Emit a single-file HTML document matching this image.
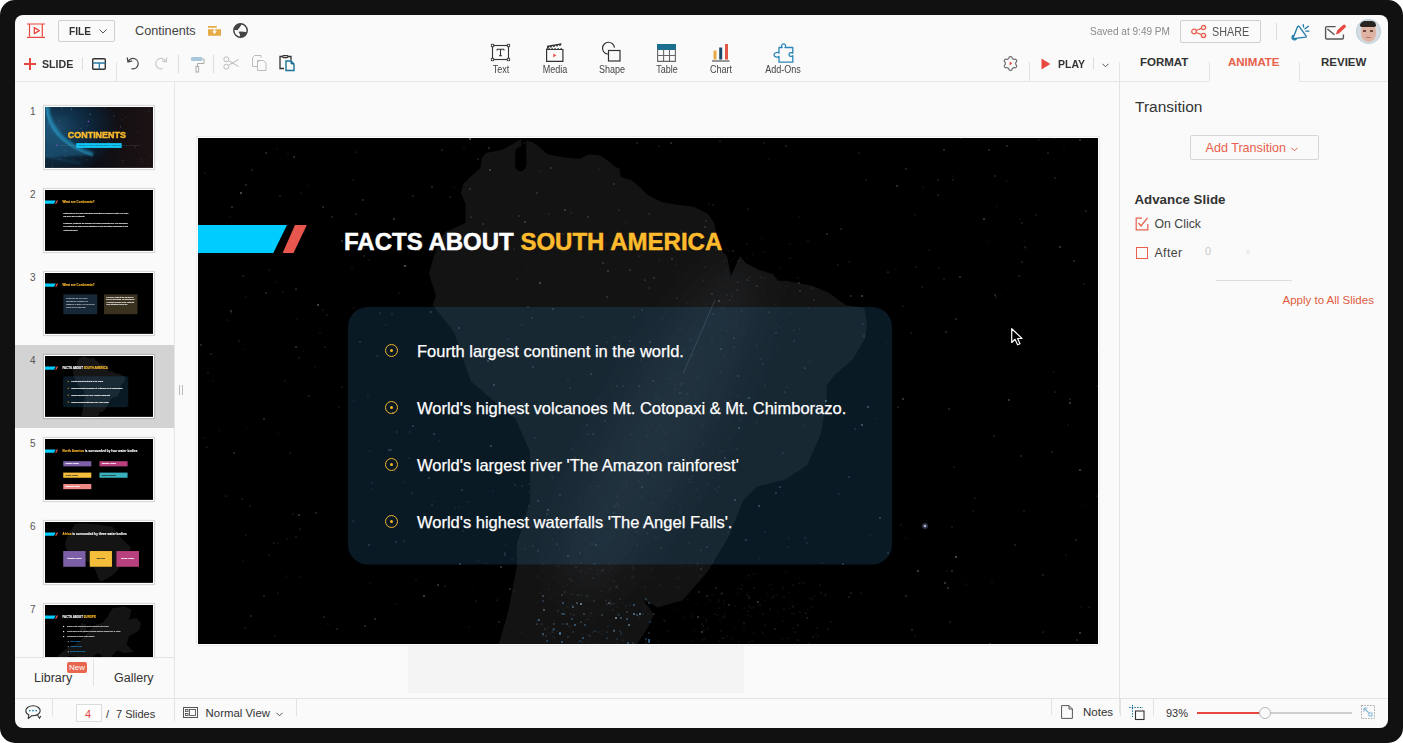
<!DOCTYPE html>
<html><head><meta charset="utf-8">
<style>
*{margin:0;padding:0;box-sizing:border-box}
html,body{width:1403px;height:743px;overflow:hidden;background:#fff;font-family:"Liberation Sans",sans-serif}
.frame{position:absolute;left:0;top:0;width:1403px;height:743px;background:#111;border-radius:15px;overflow:hidden}
.app{position:absolute;left:15px;top:15px;width:1373px;height:713px;background:#fafafa;border-radius:8px;overflow:hidden}
.pg{position:absolute;left:-15px;top:-15px;width:1403px;height:743px}
.a{position:absolute}
.t{position:absolute;white-space:nowrap;line-height:1}
.vl{position:absolute;width:1px;background:#e0e0e0}
.hl{position:absolute;height:1px;background:#e3e3e3}
svg{position:absolute;overflow:visible}
.lbl{position:absolute;top:65px;width:80px;text-align:center;font-size:10px;line-height:1;color:#444;transform:scaleX(.9);white-space:nowrap}

.bul{position:absolute;left:187px;width:13px;height:13px;border:1.5px solid #f0b429;border-radius:50%}
.bul:after{content:"";position:absolute;left:3.5px;top:3.5px;width:3px;height:3px;border-radius:50%;background:#f0b429}
.st{left:219px;font-size:16.5px;color:#fff;-webkit-text-stroke:0.25px #fff}

.thumb{position:absolute;width:110px;height:63px;border:1px solid #fff;box-shadow:0 0 1px 1px rgba(0,0,0,.13);overflow:hidden;background:#fff}
.sc{position:absolute;left:0;top:0;width:900px;height:506px;transform:scale(.12);transform-origin:0 0;overflow:hidden;background:#000}
.box5{position:absolute;width:234px;height:43px}
.bt{position:absolute;left:18px;top:12px;font-size:17px;font-weight:bold;white-space:nowrap;-webkit-text-stroke:1px currentColor}
.bt2{position:absolute;left:0;width:100%;top:55px;text-align:center;font-size:17px;font-weight:bold;white-space:nowrap;-webkit-text-stroke:1px currentColor}

</style></head>
<body>
<div class="frame">
<div class="app"><div class="pg" id="pg">

<!-- ============ TOP BAR ROW 1 ============ -->
<!-- logo -->
<svg style="left:27px;top:23px" width="18" height="15" viewBox="0 0 18 15">
 <path d="M0 1H18M0 14.4H18M2.5 1V13.5M15.3 1V13.5" stroke="#e8473f" stroke-width="1.2" fill="none"/>
 <path d="M7.3 4.6L12.3 7.6L7.3 10.6Z" stroke="#e8473f" stroke-width="1.3" fill="none" stroke-linejoin="round"/>
</svg>
<!-- FILE button -->
<div class="a" style="left:58px;top:20px;width:57px;height:22px;border:1px solid #cfcfcf;border-radius:2px;background:#fafafa"></div>
<div class="t" style="left:69px;top:26px;font-size:11.5px;font-weight:bold;color:#333;transform:scaleX(.88);transform-origin:0 0">FILE</div>
<svg style="left:99px;top:29px" width="8" height="5" viewBox="0 0 8 5"><path d="M0.5 0.5L4 4L7.5 0.5" stroke="#555" stroke-width="1" fill="none"/></svg>
<div class="t" style="left:135px;top:24.5px;font-size:12.7px;color:#444">Continents</div>
<!-- folder -->
<svg style="left:208px;top:26px" width="13" height="10" viewBox="0 0 13 10">
 <path d="M0 0H8.5L9 1.8H0Z" fill="#e6ab45"/>
 <path d="M0 3.2H13V9.8H0Z" fill="#e6ab45"/>
 <path d="M5.7 3.2H7.3V5.2H8.9L6.5 7.9L4.1 5.2H5.7Z" fill="#fff"/>
</svg>
<!-- globe -->
<svg style="left:233px;top:23px" width="15" height="15" viewBox="0 0 15 15">
 <circle cx="7.5" cy="7.5" r="6.7" stroke="#444" stroke-width="1.5" fill="none"/>
 <path d="M0.9 6.8A6.6 6.6 0 0 1 8.8 0.9Q6.8 4.5 4.4 7.3Z" fill="#444"/>
 <path d="M5.4 8.7Q10 8.2 14.2 9.6A6.7 6.7 0 0 1 7.2 14.2Q7.8 11.2 5.4 8.7Z" fill="#444"/>
</svg>

<!-- right side row1 -->
<div class="t" style="left:1090px;top:26.3px;font-size:10.5px;color:#8a8a8a;transform:scaleX(.958);transform-origin:0 0">Saved at 9:49 PM</div>
<div class="a" style="left:1180px;top:20px;width:81px;height:23px;border:1px solid #cfcfcf;border-radius:2px"></div>
<svg style="left:1191px;top:25px" width="16" height="13" viewBox="0 0 16 13">
 <circle cx="3" cy="6.5" r="2.3" stroke="#e8604c" stroke-width="1.3" fill="none"/>
 <circle cx="12.5" cy="2.6" r="2.1" stroke="#e8604c" stroke-width="1.3" fill="none"/>
 <circle cx="12.5" cy="10.4" r="2.1" stroke="#e8604c" stroke-width="1.3" fill="none"/>
 <path d="M5.1 5.5L10.5 3.4M5.1 7.5L10.5 9.6" stroke="#e8604c" stroke-width="1.3"/>
</svg>
<div class="t" style="left:1212px;top:26px;font-size:12px;color:#555;transform:scaleX(.9);transform-origin:0 0">SHARE</div>
<div class="vl" style="left:1276px;top:23px;height:17px;background:#ddd"></div>
<!-- megaphone -->
<svg style="left:1291px;top:23px" width="20" height="18" viewBox="0 0 20 18">
 <path d="M6.6 3.6Q7.5 2.6 8.3 3.6L15.2 13.2Q15.6 14 14.8 14.2L2.6 15.6Q1.8 15.6 2.2 14.8Z" stroke="#1f7aa6" stroke-width="1.3" fill="none" stroke-linejoin="round"/>
 <path d="M2.6 12.2A2.4 2.4 0 1 0 5.6 15.4" stroke="#1f7aa6" stroke-width="1.3" fill="none"/>
 <path d="M12.2 1.7L12.6 4M14 5.8L17.4 3.3M14.9 8.2H17.9" stroke="#1f7aa6" stroke-width="1.3" stroke-linecap="round"/>
</svg>
<!-- mail with pen -->
<svg style="left:1324px;top:24px" width="22" height="17" viewBox="0 0 22 17">
 <path d="M11.6 2.6H2.8Q1.6 2.6 1.6 3.8V13.8Q1.6 15 2.8 15H18.2Q19.4 15 19.4 13.8V10.4" stroke="#555" stroke-width="1.4" fill="none"/>
 <path d="M3.4 5L10.5 10.7" stroke="#555" stroke-width="1.4"/>
 <path d="M14.8 7.3L20.2 2.3" stroke="#e8473f" stroke-width="3.4" stroke-linecap="round"/><path d="M13.3 6.6L15.6 8.9L11.8 10.4Z" fill="#e8473f"/>
</svg>
<!-- avatar -->
<div class="a" style="left:1357px;top:20px;width:23px;height:23px;border-radius:50%;background:#d5dbe0;overflow:hidden;box-shadow:0 0 0 1px #b9cfdc">
 <div class="a" style="left:3.5px;top:3px;width:15px;height:19px;border-radius:45% 45% 48% 48%;background:#deb3a4"></div>
 <div class="a" style="left:3px;top:1px;width:16px;height:6px;border-radius:8px 8px 3px 3px;background:#2a2420"></div>
 <div class="a" style="left:6px;top:10px;width:3px;height:1.5px;background:#6b4a40"></div>
 <div class="a" style="left:13px;top:10px;width:3px;height:1.5px;background:#6b4a40"></div>
 <div class="a" style="left:9px;top:16.5px;width:5px;height:1.5px;border-radius:1px;background:#c0706a"></div>
</div>

<!-- ============ TOP BAR ROW 2 ============ -->
<svg style="left:24px;top:58px" width="12" height="12" viewBox="0 0 12 12"><path d="M6 0V12M0 6H12" stroke="#e8473f" stroke-width="2"/></svg>
<div class="t" style="left:42px;top:59px;font-size:11.5px;font-weight:bold;color:#333;transform:scaleX(.924);transform-origin:0 0">SLIDE</div>
<div class="vl" style="left:82px;top:57px;height:13px;background:#ddd"></div>
<svg style="left:92px;top:58px" width="14" height="12" viewBox="0 0 14 12">
 <rect x="0.7" y="0.7" width="12.6" height="10.6" rx="1" stroke="#333" stroke-width="1.4" fill="none"/>
 <path d="M0.7 5H13.3M7.3 5V11.3" stroke="#2a7aa5" stroke-width="1.3"/>
</svg>
<div class="vl" style="left:116px;top:62px;height:19px;background:#e3e3e3"></div>
<!-- undo -->
<svg style="left:126px;top:56px" width="14" height="14" viewBox="0 0 14 14">
 <path d="M2.2 5.5A5.2 5.2 0 1 1 5.5 12.6" stroke="#444" stroke-width="1.3" fill="none"/>
 <path d="M1.2 1.5L2 6L6.2 4.8" stroke="#444" stroke-width="1.3" fill="none"/>
</svg>
<!-- redo -->
<svg style="left:154px;top:56px" width="14" height="14" viewBox="0 0 14 14">
 <path d="M11.8 5.5A5.2 5.2 0 1 0 8.5 12.6" stroke="#c8c8c8" stroke-width="1.3" fill="none"/>
 <path d="M12.8 1.5L12 6L7.8 4.8" stroke="#c8c8c8" stroke-width="1.3" fill="none"/>
</svg>
<div class="vl" style="left:178px;top:55px;height:18px;background:#ddd"></div>
<!-- roller -->
<svg style="left:191px;top:57px" width="14" height="16" viewBox="0 0 14 16">
 <rect x="0" y="0" width="11" height="4" rx="1" fill="#a9c8dc"/>
 <path d="M11 2H13V6.5H6.5V9.5" stroke="#aaa" stroke-width="1" fill="none"/>
 <rect x="5" y="9.5" width="2.6" height="5.5" stroke="#aaa" stroke-width="1" fill="none"/>
</svg>
<div class="vl" style="left:213px;top:55px;height:18px;background:#ddd"></div>
<!-- scissors -->
<svg style="left:223px;top:56px" width="16" height="14" viewBox="0 0 16 14">
 <circle cx="3.3" cy="3.3" r="2.5" stroke="#bbb" stroke-width="1" fill="none"/>
 <circle cx="3.3" cy="10.7" r="2.5" stroke="#bbb" stroke-width="1" fill="none"/>
 <path d="M5.4 4.6L15.5 10.5M5.4 9.4L15.5 3.5" stroke="#bbb" stroke-width="1"/>
</svg>
<!-- copy -->
<svg style="left:252px;top:55px" width="15" height="16" viewBox="0 0 15 16">
 <path d="M9 2.5V0.5H2.5L0.5 2.5V11.5H5" stroke="#bbb" stroke-width="1" fill="none"/>
 <path d="M5.5 5.5H11.5L14 8V15.5H5.5Z M5.5 7.5L7.5 5.5" stroke="#bbb" stroke-width="1" fill="none"/>
</svg>
<!-- paste -->
<svg style="left:279px;top:55px" width="16" height="16" viewBox="0 0 16 16">
 <path d="M3.5 1.5H1V13.5H5M9 1.5H12V5.5" stroke="#333" stroke-width="1.3" fill="none"/>
 <rect x="3.7" y="0.6" width="5.2" height="2" rx="0.8" stroke="#333" stroke-width="1.2" fill="none"/>
 <path d="M7 6H12L15 9V15.5H7Z" stroke="#1a7196" stroke-width="1.4" fill="none"/>
 <path d="M12 6V9H15" fill="#1a7196" stroke="#1a7196" stroke-width="0.8"/>
</svg>

<!-- center insert tools -->
<svg style="left:491px;top:44px" width="19" height="17" viewBox="0 0 19 17">
 <rect x="1.5" y="1.5" width="16" height="14" stroke="#333" stroke-width="1.1" fill="none"/>
 <rect x="0.3" y="0.3" width="2.4" height="2.4" fill="#fafafa" stroke="#333" stroke-width="0.8"/>
 <rect x="16.3" y="0.3" width="2.4" height="2.4" fill="#fafafa" stroke="#333" stroke-width="0.8"/>
 <rect x="0.3" y="14.3" width="2.4" height="2.4" fill="#fafafa" stroke="#333" stroke-width="0.8"/>
 <rect x="16.3" y="14.3" width="2.4" height="2.4" fill="#fafafa" stroke="#333" stroke-width="0.8"/>
 <path d="M6 5.3H13M6 5.3V6.6M13 5.3V6.6M9.5 5.3V11.8M8 11.8H11" stroke="#333" stroke-width="1.1" fill="none"/>
</svg>
<div class="lbl" style="left:460.6px">Text</div>
<svg style="left:546px;top:43px" width="18" height="19" viewBox="0 0 18 19">
 <path d="M0.6 6.5V18.4H16.9V6.5H0.6Z" stroke="#333" stroke-width="1.2" fill="none"/>
 <path d="M0.6 6.5L2.5 3.5" stroke="#333" stroke-width="1.2"/>
 <path d="M1 3.5L15.5 0.8M1.5 5L3 3.2M4.5 4.5L6 2.6M7.5 3.9L9 2M10.5 3.3L12 1.5M13.5 2.7L15 1" stroke="#333" stroke-width="1.3" fill="none"/>
 <path d="M2.5 6.5L3.5 5M5.5 6.5L6.5 5M8.5 6.5L9.5 5M11.5 6.5L12.5 5M14.5 6.5L15.5 5" stroke="#333" stroke-width="1.2"/>
 <path d="M7.3 10.5L10.3 12.4L7.3 14.3Z" fill="#e8473f"/>
</svg>
<div class="lbl" style="left:514.8px">Media</div>
<svg style="left:601px;top:42px" width="21" height="21" viewBox="0 0 21 21">
 <path d="M6.8 12.2A6 6 0 1 1 13.5 5.6" stroke="#333" stroke-width="1.2" fill="none"/>
 <rect x="7.5" y="8.5" width="11.5" height="10.5" stroke="#333" stroke-width="1.2" fill="none"/>
</svg>
<div class="lbl" style="left:571.9px">Shape</div>
<svg style="left:657px;top:44px" width="19" height="18" viewBox="0 0 19 18">
 <rect x="0" y="0" width="19" height="6" fill="#1a6e8e"/>
 <path d="M0.6 5.5V17.4H18.4V5.5M0.6 11.5H18.4M6.6 5.5V17.4M12.5 5.5V17.4" stroke="#666" stroke-width="1.1" fill="none"/>
</svg>
<div class="lbl" style="left:626.9px">Table</div>
<svg style="left:712px;top:43px" width="18" height="19" viewBox="0 0 18 19">
 <rect x="1.5" y="7.5" width="3" height="9" fill="#e6ab45"/>
 <rect x="7.2" y="4.5" width="3" height="12" fill="#1b4b6a"/>
 <rect x="13" y="1" width="3" height="15.5" fill="#e05543"/>
 <path d="M0 18H17.5" stroke="#333" stroke-width="1.1"/>
</svg>
<div class="lbl" style="left:680.9px">Chart</div>
<svg style="left:773px;top:43px" width="21" height="20" viewBox="0 0 21 20">
 <path d="M6 4.5H9.2C8.2 3.5 8.3 0.8 10.6 0.8C12.9 0.8 13 3.5 12 4.5H19.8V10.2C18.8 9.2 16 9.3 16 11.5C16 13.7 18.8 13.8 19.8 12.8V19.2H6V13.5C5 14.5 1 14.5 1 11.8C1 9.1 5 9.1 6 10.1Z" stroke="#2a86b8" stroke-width="1.3" fill="none" stroke-linejoin="round"/>
</svg>
<div class="lbl" style="left:743px">Add-Ons</div>

<!-- right row2 -->
<svg style="left:1002.5px;top:55.5px" width="15" height="15" viewBox="0 0 15 15">
 <path d="M12.65 7.50 L12.66 7.32 L12.67 7.14 L12.70 6.95 L12.74 6.76 L12.80 6.57 L12.88 6.36 L13.02 6.12 L13.56 5.76 L13.68 5.49 L13.72 5.24 L13.72 4.99 L13.69 4.75 L13.63 4.51 L13.54 4.29 L13.43 4.08 L13.30 3.87 L13.15 3.69 L12.98 3.52 L12.79 3.37 L12.57 3.24 L12.33 3.15 L12.04 3.12 L11.45 3.41 L11.18 3.41 L10.96 3.38 L10.76 3.33 L10.57 3.27 L10.40 3.20 L10.23 3.13 L10.08 3.04 L9.92 2.95 L9.77 2.84 L9.63 2.72 L9.48 2.59 L9.34 2.45 L9.20 2.27 L9.07 2.03 L9.03 1.38 L8.85 1.14 L8.65 0.98 L8.43 0.86 L8.21 0.76 L7.98 0.70 L7.74 0.66 L7.50 0.65 L7.26 0.66 L7.02 0.70 L6.79 0.76 L6.57 0.86 L6.35 0.98 L6.15 1.14 L5.97 1.38 L5.93 2.03 L5.80 2.27 L5.66 2.45 L5.52 2.59 L5.37 2.72 L5.23 2.84 L5.08 2.95 L4.93 3.04 L4.77 3.13 L4.60 3.20 L4.43 3.27 L4.24 3.33 L4.04 3.38 L3.82 3.41 L3.55 3.41 L2.96 3.12 L2.67 3.15 L2.43 3.24 L2.21 3.37 L2.02 3.52 L1.85 3.69 L1.70 3.87 L1.57 4.08 L1.46 4.29 L1.37 4.51 L1.31 4.75 L1.28 4.99 L1.28 5.24 L1.32 5.49 L1.44 5.76 L1.98 6.12 L2.12 6.36 L2.20 6.57 L2.26 6.76 L2.30 6.95 L2.33 7.14 L2.34 7.32 L2.35 7.50 L2.34 7.68 L2.33 7.86 L2.30 8.05 L2.26 8.24 L2.20 8.43 L2.12 8.64 L1.98 8.88 L1.44 9.24 L1.32 9.51 L1.28 9.76 L1.28 10.01 L1.31 10.25 L1.37 10.49 L1.46 10.71 L1.57 10.93 L1.70 11.13 L1.85 11.31 L2.02 11.48 L2.21 11.63 L2.43 11.76 L2.67 11.85 L2.96 11.88 L3.55 11.59 L3.82 11.59 L4.04 11.62 L4.24 11.67 L4.43 11.73 L4.60 11.80 L4.77 11.87 L4.92 11.96 L5.08 12.05 L5.23 12.16 L5.37 12.28 L5.52 12.41 L5.66 12.55 L5.80 12.73 L5.93 12.97 L5.97 13.62 L6.15 13.86 L6.35 14.02 L6.57 14.14 L6.79 14.24 L7.02 14.30 L7.26 14.34 L7.50 14.35 L7.74 14.34 L7.98 14.30 L8.21 14.24 L8.43 14.14 L8.65 14.02 L8.85 13.86 L9.03 13.62 L9.07 12.97 L9.20 12.73 L9.34 12.55 L9.48 12.41 L9.63 12.28 L9.77 12.16 L9.92 12.05 L10.08 11.96 L10.23 11.87 L10.40 11.80 L10.57 11.73 L10.76 11.67 L10.96 11.62 L11.18 11.59 L11.45 11.59 L12.04 11.88 L12.33 11.85 L12.57 11.76 L12.79 11.63 L12.98 11.48 L13.15 11.31 L13.30 11.13 L13.43 10.93 L13.54 10.71 L13.63 10.49 L13.69 10.25 L13.72 10.01 L13.72 9.76 L13.68 9.51 L13.56 9.24 L13.02 8.88 L12.88 8.64 L12.80 8.43 L12.74 8.24 L12.70 8.05 L12.67 7.86 L12.66 7.68Z" stroke="#666" stroke-width="1.1" fill="none" stroke-linejoin="round"/>
 <path d="M6.6 5.6L9.2 7.5L6.6 9.4Z" fill="#e8473f"/>
</svg>
<div class="vl" style="left:1029px;top:62px;height:19px;background:#e3e3e3"></div>
<svg style="left:1041px;top:58px" width="10" height="12" viewBox="0 0 10 12"><path d="M0.5 0.5L9.3 6L0.5 11.5Z" fill="#e8473f"/></svg>
<div class="t" style="left:1058px;top:59.3px;font-size:11.5px;font-weight:bold;color:#333;transform:scaleX(.913);transform-origin:0 0">PLAY</div>
<div class="vl" style="left:1093px;top:57px;height:12px;background:#ddd"></div>
<svg style="left:1102px;top:63px" width="7" height="5" viewBox="0 0 7 5"><path d="M0.5 0.8L3.5 3.8L6.5 0.8" stroke="#555" stroke-width="1" fill="none"/></svg>

<!-- tabs -->
<div class="vl" style="left:1119px;top:62px;height:651px;background:#e3e3e3"></div>
<div class="vl" style="left:1209px;top:62px;height:19px;background:#e3e3e3"></div>
<div class="vl" style="left:1299px;top:62px;height:19px;background:#e3e3e3"></div>
<div class="t" style="left:1140px;top:57px;font-size:11.5px;font-weight:bold;color:#333">FORMAT</div>
<div class="t" style="left:1228px;top:57px;font-size:11.5px;font-weight:bold;color:#e8604c">ANIMATE</div>
<div class="t" style="left:1321px;top:57px;font-size:11.5px;font-weight:bold;color:#333">REVIEW</div>

<!-- toolbar bottom border -->
<div class="hl" style="left:15px;top:81px;width:1105px;background:#e6e6e6"></div>
<div class="hl" style="left:1120px;top:81px;width:89px;background:#e6e6e6"></div>
<div class="hl" style="left:1299px;top:81px;width:89px;background:#e6e6e6"></div>


<!-- ============ LEFT PANEL ============ -->
<div class="vl" style="left:174px;top:82px;height:616px;background:#e6e6e6"></div>
<div class="a" style="left:15px;top:345px;width:159px;height:83px;background:#d3d3d3"></div>
<div class="t" style="left:30px;top:107px;font-size:10px;color:#555">1</div>
<div class="t" style="left:30px;top:190px;font-size:10px;color:#555">2</div>
<div class="t" style="left:30px;top:273px;font-size:10px;color:#555">3</div>
<div class="t" style="left:30px;top:356px;font-size:10px;color:#555">4</div>
<div class="t" style="left:30px;top:439px;font-size:10px;color:#555">5</div>
<div class="t" style="left:30px;top:522px;font-size:10px;color:#555">6</div>
<div class="t" style="left:30px;top:605px;font-size:10px;color:#555">7</div>

<!-- thumbs -->
<div class="thumb" style="left:44px;top:106px"><div class="sc"><div class="a" style="left:0;top:0;width:900px;height:506px;background:radial-gradient(ellipse 60% 80% at 8% 35%,#1d4e6e 0%,#10304a 40%,rgba(10,20,30,0) 100%),linear-gradient(90deg,#0c1c2a 0%,#0a0e16 45%,#161012 75%,#1c1214 100%)"></div>
<svg style="left:0;top:0" width="900" height="506" viewBox="0 0 900 506"><defs><filter id="pb" x="-50%" y="-50%" width="200%" height="200%"><feGaussianBlur stdDeviation="10"/></filter></defs>
<path d="M0 0H30Q40 280 400 400L0 420Z" fill="#1a5a80" fill-opacity=".6" filter="url(#pb)"/>
<path d="M20 -10Q30 270 400 395" stroke="#2aa8d8" stroke-opacity=".55" stroke-width="34" fill="none" filter="url(#pb)"/>
<path d="M10 -10Q25 285 400 405" stroke="#3ec0ee" stroke-opacity=".3" stroke-width="8" fill="none"/>
<path d="M0 400Q150 450 300 470" stroke="#1a6a90" stroke-opacity=".25" stroke-width="20" fill="none" filter="url(#pb)"/><circle cx="214" cy="275" r="4" fill="#60a0c0" fill-opacity="0.49"/><circle cx="523" cy="306" r="4" fill="#806060" fill-opacity="0.52"/><circle cx="173" cy="363" r="5" fill="#60a0c0" fill-opacity="0.49"/><circle cx="575" cy="76" r="5" fill="#5a7a90" fill-opacity="0.65"/><circle cx="471" cy="375" r="5" fill="#5a7a90" fill-opacity="0.36"/><circle cx="862" cy="22" r="3" fill="#806060" fill-opacity="0.49"/><circle cx="647" cy="445" r="5" fill="#806060" fill-opacity="0.46"/><circle cx="721" cy="225" r="3" fill="#806060" fill-opacity="0.34"/><circle cx="122" cy="110" r="5" fill="#806060" fill-opacity="0.61"/><circle cx="770" cy="213" r="4" fill="#60a0c0" fill-opacity="0.44"/><circle cx="527" cy="296" r="4" fill="#60a0c0" fill-opacity="0.67"/><circle cx="26" cy="142" r="5" fill="#60a0c0" fill-opacity="0.58"/><circle cx="629" cy="165" r="5" fill="#60a0c0" fill-opacity="0.53"/><circle cx="642" cy="107" r="5" fill="#806060" fill-opacity="0.41"/><circle cx="57" cy="432" r="4" fill="#5a7a90" fill-opacity="0.44"/><circle cx="60" cy="454" r="3" fill="#806060" fill-opacity="0.47"/><circle cx="374" cy="60" r="5" fill="#60a0c0" fill-opacity="0.60"/><circle cx="340" cy="297" r="5" fill="#806060" fill-opacity="0.50"/><circle cx="899" cy="157" r="3" fill="#5a7a90" fill-opacity="0.54"/><circle cx="28" cy="100" r="4" fill="#806060" fill-opacity="0.54"/><circle cx="141" cy="21" r="4" fill="#806060" fill-opacity="0.44"/><circle cx="124" cy="436" r="4" fill="#806060" fill-opacity="0.65"/><circle cx="348" cy="439" r="5" fill="#60a0c0" fill-opacity="0.34"/><circle cx="876" cy="411" r="4" fill="#806060" fill-opacity="0.55"/><circle cx="644" cy="474" r="4" fill="#806060" fill-opacity="0.51"/><circle cx="494" cy="6" r="4" fill="#60a0c0" fill-opacity="0.43"/><circle cx="339" cy="298" r="3" fill="#5a7a90" fill-opacity="0.55"/><circle cx="299" cy="179" r="4" fill="#60a0c0" fill-opacity="0.58"/><circle cx="664" cy="11" r="3" fill="#60a0c0" fill-opacity="0.31"/><circle cx="332" cy="318" r="4" fill="#60a0c0" fill-opacity="0.54"/><circle cx="160" cy="94" r="4" fill="#60a0c0" fill-opacity="0.41"/><circle cx="709" cy="53" r="3" fill="#60a0c0" fill-opacity="0.57"/><circle cx="118" cy="253" r="5" fill="#806060" fill-opacity="0.40"/><circle cx="169" cy="220" r="5" fill="#5a7a90" fill-opacity="0.34"/><circle cx="290" cy="169" r="3" fill="#806060" fill-opacity="0.62"/><circle cx="865" cy="40" r="5" fill="#60a0c0" fill-opacity="0.39"/><circle cx="512" cy="137" r="3" fill="#5a7a90" fill-opacity="0.51"/><circle cx="172" cy="408" r="5" fill="#5a7a90" fill-opacity="0.65"/><circle cx="306" cy="419" r="3" fill="#60a0c0" fill-opacity="0.44"/><circle cx="117" cy="148" r="4" fill="#806060" fill-opacity="0.44"/><circle cx="375" cy="212" r="4" fill="#5a7a90" fill-opacity="0.67"/><circle cx="140" cy="2" r="5" fill="#60a0c0" fill-opacity="0.47"/><circle cx="855" cy="469" r="3" fill="#5a7a90" fill-opacity="0.60"/><circle cx="753" cy="335" r="5" fill="#806060" fill-opacity="0.52"/><circle cx="801" cy="436" r="5" fill="#806060" fill-opacity="0.35"/><circle cx="220" cy="18" r="5" fill="#60a0c0" fill-opacity="0.67"/><circle cx="807" cy="455" r="5" fill="#5a7a90" fill-opacity="0.31"/><circle cx="671" cy="87" r="4" fill="#5a7a90" fill-opacity="0.57"/><circle cx="472" cy="209" r="5" fill="#5a7a90" fill-opacity="0.44"/><circle cx="227" cy="436" r="4" fill="#5a7a90" fill-opacity="0.44"/><circle cx="178" cy="271" r="3" fill="#5a7a90" fill-opacity="0.40"/><circle cx="246" cy="450" r="3" fill="#5a7a90" fill-opacity="0.50"/><circle cx="514" cy="203" r="4" fill="#5a7a90" fill-opacity="0.41"/><circle cx="475" cy="214" r="4" fill="#806060" fill-opacity="0.61"/><circle cx="2" cy="28" r="3" fill="#5a7a90" fill-opacity="0.35"/><circle cx="62" cy="493" r="5" fill="#5a7a90" fill-opacity="0.51"/><circle cx="441" cy="79" r="3" fill="#806060" fill-opacity="0.45"/><circle cx="351" cy="154" r="4" fill="#5a7a90" fill-opacity="0.70"/><circle cx="386" cy="65" r="3" fill="#60a0c0" fill-opacity="0.59"/><circle cx="716" cy="287" r="3" fill="#806060" fill-opacity="0.48"/>
</svg>
<div class="a" style="left:355px;top:115px;width:12px;height:12px;border-radius:50%;background:#a050e0"></div>
<div class="a" style="left:95px;top:312px;width:12px;height:12px;border-radius:50%;background:#a050e0"></div>
<div class="a" style="left:125px;top:320px;width:667px;height:3px;background:rgba(200,200,200,.3)"></div>
<div class="a" style="left:261px;top:301px;width:378px;height:40px;background:#12c6f5"></div>
<div class="t" style="left:280px;top:313px;font-size:16px;color:#063;letter-spacing:1px;color:#0b3a4a">SEVEN LARGE CONTINUOUS MASSES OF LAND</div>
<div class="t" style="left:190px;top:194px;font-size:81px;font-weight:bold;color:#fdbb2d;-webkit-text-stroke:4px #fdbb2d;transform:scaleX(.92);transform-origin:0 0">CONTINENTS</div></div></div>
<div class="thumb" style="left:44px;top:189px"><div class="sc"><div class="a" style="left:0;top:0;width:900px;height:506px;background:#000"></div><svg style="left:0;top:0" width="900" height="506" viewBox="0 0 900 506"><path d="M0 87H89L75.3 115H0Z" fill="#00ccff"/><path d="M97 87H108.8L95.5 115H84.6Z" fill="#e8574e"/></svg><div class="t" style="left:146px;top:92px;font-size:24px;font-weight:bold;color:#fff;-webkit-text-stroke:1px currentColor;letter-spacing:1px"><span style="color:#fdbb2d">What are Continents?</span></div>
<div class="a" style="left:152px;top:180px;width:545px;font-size:15px;line-height:29px;color:#eee;-webkit-text-stroke:.8px #eee">Continents are very large landmasses separated by expanses of water. The world has seven such continents.</div>
<div class="a" style="left:152px;top:266px;width:545px;font-size:15px;line-height:27px;color:#eee;-webkit-text-stroke:.8px #eee">Geography, continents are described by types of landmass here. The boundaries of a continent are based on the distribution of land and water; landmasses by rule "continental shelf".</div></div></div>
<div class="thumb" style="left:44px;top:272px"><div class="sc"><div class="a" style="left:0;top:0;width:900px;height:506px;background:#000"></div><svg style="left:0;top:0" width="900" height="506" viewBox="0 0 900 506"><path d="M0 87H89L75.3 115H0Z" fill="#00ccff"/><path d="M97 87H108.8L95.5 115H84.6Z" fill="#e8574e"/></svg><div class="t" style="left:146px;top:92px;font-size:24px;font-weight:bold;color:#fff;-webkit-text-stroke:1px currentColor;letter-spacing:1px"><span style="color:#fdbb2d">What are Continents?</span></div>
<div class="a" style="left:153px;top:178px;width:282px;height:165px;background:#172839"></div>
<div class="a" style="left:492px;top:178px;width:279px;height:165px;background:#3b311f"></div>
<div class="a" style="left:175px;top:195px;width:240px;font-size:15px;line-height:27px;color:#ddd;font-weight:bold">Continents are very large landmasses separated by expanses of water. The world has seven such continents.</div>
<div class="a" style="left:512px;top:195px;width:240px;font-size:13px;line-height:20px;color:#eee;-webkit-text-stroke:.8px #eee">In geology, continents are described by types of land masses. The boundaries of a continent are based on the continental shelf, distributing rocks by rule.</div></div></div>
<div class="thumb" style="left:44px;top:355px"><div class="sc"><div class="a" style="left:0;top:0;width:900px;height:506px;background:#000"></div>
<svg style="left:0;top:0" width="900" height="506" viewBox="198 138 900 506"><path d="M520.4 139.4 L531.8 141.7 L538.6 146.3 L547.7 154.2 L566.0 157.7 L579.7 158.8 L588.8 154.2 L600.2 155.4 L607.0 160.0 L613.9 165.7 L619.6 169.0 L620.7 177.0 L632.0 180.5 L641.3 188.5 L648.0 195.3 L661.8 202.1 L675.5 204.4 L693.7 206.7 L707.4 213.6 L714.3 222.7 L716.5 234.0 L721.0 250.0 L727.0 256.0 L731.0 276.0 L740.0 256.0 L745.8 263.3 L759.2 270.0 L772.7 274.0 L778.0 280.8 L786.0 280.8 L813.0 286.0 L829.2 292.9 L845.4 305.0 L864.2 307.7 L866.9 323.8 L865.5 337.3 L853.4 358.8 L834.6 375.0 L826.5 385.7 L826.5 400.0 L821.0 433.3 L807.0 465.3 L785.6 479.5 L757.0 486.6 L743.0 500.8 L728.8 536.4 L707.4 572.0 L682.6 600.3 L657.7 607.4 L643.5 600.3 L654.0 614.5 L647.0 628.8 L636.0 646.0 L498.0 646.0 L501.3 636.0 L508.7 609.6 L516.8 566.0 L516.8 544.0 L530.4 501.0 L529.7 451.0 L515.5 419.0 L508.7 414.0 L470.6 381.0 L454.0 332.0 L432.6 305.0 L436.0 295.7 L431.4 282.0 L429.0 272.9 L433.7 256.9 L440.5 238.6 L445.0 231.8 L456.5 227.2 L465.6 222.7 L465.6 204.4 L461.0 193.0 L463.3 184.0 L472.5 174.8 L480.4 168.0 L481.6 158.8 L486.0 153.0 L502.0 149.7 L511.2 145.0Z" fill="#161616"/>
<path d="M198 225H287L273.3 253H198Z" fill="#00ccff"/><path d="M295 225H306.8L293.5 253H282.6Z" fill="#e8574e"/>
<rect x="348" y="307" width="544" height="257.5" rx="20" fill="rgb(45,118,168)" fill-opacity="0.22"/></svg>
<div class="t" style="left:146px;top:92px;font-size:24px;font-weight:bold;color:#fff;-webkit-text-stroke:1px currentColor">FACTS ABOUT <span style="color:#fdbb2d">SOUTH AMERICA</span></div>
<div class="bul" style="top:206px;border-width:3px"></div><div class="bul" style="top:263px;border-width:3px"></div><div class="bul" style="top:320px;border-width:3px"></div><div class="bul" style="top:377px;border-width:3px"></div>
<div class="t st" style="top:205px;-webkit-text-stroke:1px #fff">Fourth largest continent in the world.</div>
<div class="t st" style="top:262px;-webkit-text-stroke:1px #fff">World's highest volcanoes Mt. Cotopaxi &amp; Mt. Chimborazo.</div>
<div class="t st" style="top:319px;-webkit-text-stroke:1px #fff">World's largest river 'The Amazon rainforest'</div>
<div class="t st" style="top:376px;-webkit-text-stroke:1px #fff">World's highest waterfalls 'The Angel Falls'.</div></div></div>
<div class="thumb" style="left:44px;top:438px"><div class="sc"><div class="a" style="left:0;top:0;width:900px;height:506px;background:#000"></div><svg style="left:0;top:0" width="900" height="506" viewBox="0 0 900 506"><path d="M0 87H89L75.3 115H0Z" fill="#00ccff"/><path d="M97 87H108.8L95.5 115H84.6Z" fill="#e8574e"/></svg><div class="t" style="left:146px;top:92px;font-size:24px;font-weight:bold;color:#fff;-webkit-text-stroke:1px currentColor;letter-spacing:1.1px"><span style="color:#fdbb2d">North America</span> is surrounded by four water bodies</div>
<div class="box5" style="left:152px;top:185px;background:#7d5fa8"><span class="bt" style="color:#fff">Pacific Ocean</span></div>
<div class="box5" style="left:454px;top:185px;background:#b8407e"><span class="bt" style="color:#fff">Atlantic Ocean</span></div>
<div class="box5" style="left:152px;top:280px;background:#f5be3a"><span class="bt" style="color:#333">Arctic Ocean</span></div>
<div class="box5" style="left:454px;top:280px;background:#38b0bd"><span class="bt" style="color:#222">Gulf of Mexico</span></div>
<div class="box5" style="left:152px;top:375px;background:#ee8a86"><span class="bt" style="color:#fff">Caribbean Sea</span></div></div></div>
<div class="thumb" style="left:44px;top:521px"><div class="sc"><div class="a" style="left:0;top:0;width:900px;height:506px;background:#000"></div>
<svg style="left:0;top:0" width="900" height="506" viewBox="0 0 900 506"><path d="M253 17C330 5 480 25 564 42C600 90 640 150 716 210C700 260 650 300 640 340C620 400 560 460 463 497C440 470 430 420 410 380C380 330 330 320 250 290C200 270 170 230 168 185C180 120 220 60 253 17Z" fill="#141414"/></svg><svg style="left:0;top:0" width="900" height="506" viewBox="0 0 900 506"><path d="M0 87H89L75.3 115H0Z" fill="#00ccff"/><path d="M97 87H108.8L95.5 115H84.6Z" fill="#e8574e"/></svg><div class="t" style="left:146px;top:92px;font-size:24px;font-weight:bold;color:#fff;-webkit-text-stroke:1px currentColor;letter-spacing:1.1px"><span style="color:#fdbb2d">Africa</span> is surrounded by three water bodies</div>
<div class="a" style="left:152px;top:242px;width:186px;height:131px;background:#7d5fa8"><span class="bt2" style="color:#fff">Atlantic Ocean</span></div>
<div class="a" style="left:373px;top:242px;width:185px;height:131px;background:#f5be3a"><span class="bt2" style="color:#333">Red Sea</span></div>
<div class="a" style="left:595px;top:242px;width:188px;height:131px;background:#b8407e"><span class="bt2" style="color:#fff">Indian Ocean</span></div></div></div>
<div class="thumb" style="left:44px;top:604px"><div class="sc"><div class="a" style="left:0;top:0;width:900px;height:506px;background:#000"></div>
<svg style="left:0;top:0" width="900" height="506" viewBox="0 0 900 506"><path d="M560 30 L660 10 L720 40 L700 120 L760 110 L800 150 L790 200 L771 222 L700 260 L680 330 L743 391 L660 400 L600 380 L560 420 L520 480 L480 430 L440 400 L400 430 L330 470 L260 430 L200 420 L150 470 L108 506 L60 506 L90 440 L172 369 L250 330 L300 290 L340 250 L380 200 L430 160 L480 150 L520 100Z M300 150L340 160L350 220L320 240L290 210Z" fill="#141414"/></svg><svg style="left:0;top:0" width="900" height="506" viewBox="0 0 900 506"><path d="M0 87H89L75.3 115H0Z" fill="#00ccff"/><path d="M97 87H108.8L95.5 115H84.6Z" fill="#e8574e"/></svg><div class="t" style="left:146px;top:92px;font-size:24px;font-weight:bold;color:#fff;-webkit-text-stroke:1px currentColor">FACTS ABOUT <span style="color:#fdbb2d">EUROPE</span></div>
<div class="a" style="left:150px;top:174px;width:10px;height:10px;background:#ddd"></div>
<div class="a" style="left:150px;top:216px;width:10px;height:10px;background:#ddd"></div>
<div class="a" style="left:150px;top:258px;width:10px;height:10px;background:#ddd"></div>
<div class="t" style="left:183px;top:170px;font-size:15px;color:#ddd;-webkit-text-stroke:.8px #ddd">Europe is the second smallest continent in the world.</div>
<div class="t" style="left:183px;top:212px;font-size:15px;color:#ddd;-webkit-text-stroke:.8px #ddd">Mount Elbrus is the highest mountain and the longest river is Volga.</div>
<div class="t" style="left:183px;top:254px;font-size:15px;color:#ddd;-webkit-text-stroke:.8px #ddd">Surrounded by three water bodies:</div>
<div class="a" style="left:190px;top:302px;width:8px;height:8px;background:#ccc"></div>
<div class="a" style="left:190px;top:344px;width:8px;height:8px;background:#ccc"></div>
<div class="a" style="left:190px;top:386px;width:8px;height:8px;background:#ccc"></div>
<div class="t" style="left:208px;top:298px;font-size:15px;color:#1a8ad0;-webkit-text-stroke:.8px #1a8ad0">Arctic Ocean</div>
<div class="t" style="left:208px;top:340px;font-size:15px;color:#1a8ad0;-webkit-text-stroke:.8px #1a8ad0">Atlantic Ocean</div>
<div class="t" style="left:208px;top:382px;font-size:15px;color:#1a8ad0;-webkit-text-stroke:.8px #1a8ad0">Mediterranean Sea</div></div></div>

<!-- Library / Gallery -->
<div class="a" style="left:15px;top:657px;width:159px;height:41px;background:#fafafa"></div>
<div class="hl" style="left:15px;top:657px;width:159px;background:#e3e3e3"></div>
<div class="vl" style="left:93px;top:659px;height:27px;background:#e3e3e3"></div>
<div class="t" style="left:34px;top:672px;font-size:12.5px;color:#333">Library</div>
<div class="t" style="left:114px;top:672px;font-size:12.5px;color:#333">Gallery</div>
<div class="a" style="left:67px;top:662px;width:20px;height:11px;background:#e8664f;border-radius:2px"></div>
<div class="t" style="left:69px;top:663.5px;font-size:8px;color:#fff">New</div>
<!-- resize handle -->
<div class="a" style="left:179px;top:385px;width:1px;height:10px;background:#bbb"></div>
<div class="a" style="left:182px;top:385px;width:1px;height:10px;background:#bbb"></div>

<!-- ============ SLIDE ============ -->
<div class="a" style="left:408px;top:644px;width:336px;height:49px;background:#f4f4f4"></div>
<div class="a" style="left:196px;top:136px;width:904px;height:510px;background:#ececec"></div>
<div class="a" style="left:197px;top:137px;width:902px;height:508px;background:#fff"></div>
<div class="a" id="slide" style="left:198px;top:138px;width:900px;height:506px;background:#000;overflow:hidden">
<svg style="left:0;top:0" width="900" height="506" viewBox="198 138 900 506">
 <defs>
  <clipPath id="cp"><path d="M520.4 139.4 L531.8 141.7 L538.6 146.3 L547.7 154.2 L566.0 157.7 L579.7 158.8 L588.8 154.2 L600.2 155.4 L607.0 160.0 L613.9 165.7 L619.6 169.0 L620.7 177.0 L632.0 180.5 L641.3 188.5 L648.0 195.3 L661.8 202.1 L675.5 204.4 L693.7 206.7 L707.4 213.6 L714.3 222.7 L716.5 234.0 L721.0 250.0 L727.0 256.0 L731.0 276.0 L740.0 256.0 L745.8 263.3 L759.2 270.0 L772.7 274.0 L778.0 280.8 L786.0 280.8 L813.0 286.0 L829.2 292.9 L845.4 305.0 L864.2 307.7 L866.9 323.8 L865.5 337.3 L853.4 358.8 L834.6 375.0 L826.5 385.7 L826.5 400.0 L821.0 433.3 L807.0 465.3 L785.6 479.5 L757.0 486.6 L743.0 500.8 L728.8 536.4 L707.4 572.0 L682.6 600.3 L657.7 607.4 L643.5 600.3 L654.0 614.5 L647.0 628.8 L636.0 646.0 L498.0 646.0 L501.3 636.0 L508.7 609.6 L516.8 566.0 L516.8 544.0 L530.4 501.0 L529.7 451.0 L515.5 419.0 L508.7 414.0 L470.6 381.0 L454.0 332.0 L432.6 305.0 L436.0 295.7 L431.4 282.0 L429.0 272.9 L433.7 256.9 L440.5 238.6 L445.0 231.8 L456.5 227.2 L465.6 222.7 L465.6 204.4 L461.0 193.0 L463.3 184.0 L472.5 174.8 L480.4 168.0 L481.6 158.8 L486.0 153.0 L502.0 149.7 L511.2 145.0Z"/></clipPath>
  <filter id="bl" x="-50%" y="-50%" width="200%" height="200%"><feGaussianBlur stdDeviation="22"/></filter>
 </defs>
 <path d="M520.4 139.4 L531.8 141.7 L538.6 146.3 L547.7 154.2 L566.0 157.7 L579.7 158.8 L588.8 154.2 L600.2 155.4 L607.0 160.0 L613.9 165.7 L619.6 169.0 L620.7 177.0 L632.0 180.5 L641.3 188.5 L648.0 195.3 L661.8 202.1 L675.5 204.4 L693.7 206.7 L707.4 213.6 L714.3 222.7 L716.5 234.0 L721.0 250.0 L727.0 256.0 L731.0 276.0 L740.0 256.0 L745.8 263.3 L759.2 270.0 L772.7 274.0 L778.0 280.8 L786.0 280.8 L813.0 286.0 L829.2 292.9 L845.4 305.0 L864.2 307.7 L866.9 323.8 L865.5 337.3 L853.4 358.8 L834.6 375.0 L826.5 385.7 L826.5 400.0 L821.0 433.3 L807.0 465.3 L785.6 479.5 L757.0 486.6 L743.0 500.8 L728.8 536.4 L707.4 572.0 L682.6 600.3 L657.7 607.4 L643.5 600.3 L654.0 614.5 L647.0 628.8 L636.0 646.0 L498.0 646.0 L501.3 636.0 L508.7 609.6 L516.8 566.0 L516.8 544.0 L530.4 501.0 L529.7 451.0 L515.5 419.0 L508.7 414.0 L470.6 381.0 L454.0 332.0 L432.6 305.0 L436.0 295.7 L431.4 282.0 L429.0 272.9 L433.7 256.9 L440.5 238.6 L445.0 231.8 L456.5 227.2 L465.6 222.7 L465.6 204.4 L461.0 193.0 L463.3 184.0 L472.5 174.8 L480.4 168.0 L481.6 158.8 L486.0 153.0 L502.0 149.7 L511.2 145.0Z" fill="#131313"/>
 <path d="M521 139L526 140.5L526.5 164Q525 171.5 520.5 171.5Q515 171 515 163L515.5 151Q517 147 521.5 146Z" fill="#000"/>
 <g clip-path="url(#cp)"><ellipse cx="660" cy="430" rx="190" ry="40" fill="#6a7684" fill-opacity="0.13" filter="url(#bl)" transform="rotate(-62 660 430)"/></g>
 <g><circle cx="605" cy="421" r="0.8" fill="#7a9ab8" fill-opacity="0.35"/><circle cx="369" cy="545" r="0.8" fill="#b8c8d8" fill-opacity="0.41"/><circle cx="283" cy="292" r="0.5" fill="#8fa8c0" fill-opacity="0.38"/><circle cx="734" cy="338" r="0.8" fill="#7a9ab8" fill-opacity="0.42"/><circle cx="783" cy="453" r="0.9" fill="#8fa8c0" fill-opacity="0.20"/><circle cx="369" cy="260" r="0.5" fill="#6f8faf" fill-opacity="0.47"/><circle cx="594" cy="564" r="0.9" fill="#6f8faf" fill-opacity="0.27"/><circle cx="648" cy="473" r="0.8" fill="#d0d8e0" fill-opacity="0.42"/><circle cx="1096" cy="642" r="0.5" fill="#6f8faf" fill-opacity="0.44"/><circle cx="880" cy="398" r="0.5" fill="#8fa8c0" fill-opacity="0.21"/><circle cx="558" cy="566" r="0.8" fill="#8fa8c0" fill-opacity="0.20"/><circle cx="961" cy="138" r="0.6" fill="#8fa8c0" fill-opacity="0.52"/><circle cx="621" cy="634" r="0.8" fill="#7a9ab8" fill-opacity="0.34"/><circle cx="765" cy="532" r="0.7" fill="#6f8faf" fill-opacity="0.30"/><circle cx="497" cy="626" r="0.5" fill="#8fa8c0" fill-opacity="0.23"/><circle cx="208" cy="373" r="0.8" fill="#7a9ab8" fill-opacity="0.25"/><circle cx="368" cy="395" r="0.6" fill="#d0d8e0" fill-opacity="0.34"/><circle cx="303" cy="351" r="0.6" fill="#7a9ab8" fill-opacity="0.18"/><circle cx="472" cy="586" r="0.6" fill="#7a9ab8" fill-opacity="0.25"/><circle cx="776" cy="189" r="0.6" fill="#6f8faf" fill-opacity="0.26"/><circle cx="207" cy="447" r="0.7" fill="#8fa8c0" fill-opacity="0.32"/><circle cx="279" cy="433" r="0.6" fill="#6f8faf" fill-opacity="0.19"/><circle cx="533" cy="367" r="0.9" fill="#7a9ab8" fill-opacity="0.36"/><circle cx="320" cy="333" r="0.6" fill="#b8c8d8" fill-opacity="0.30"/><circle cx="934" cy="264" r="0.6" fill="#7a9ab8" fill-opacity="0.24"/><circle cx="375" cy="619" r="0.8" fill="#d0d8e0" fill-opacity="0.40"/><circle cx="241" cy="193" r="0.9" fill="#b8c8d8" fill-opacity="0.54"/><circle cx="864" cy="336" r="0.8" fill="#7a9ab8" fill-opacity="0.48"/><circle cx="640" cy="401" r="0.5" fill="#d0d8e0" fill-opacity="0.23"/><circle cx="701" cy="569" r="0.9" fill="#b8c8d8" fill-opacity="0.21"/><circle cx="1024" cy="241" r="0.5" fill="#d0d8e0" fill-opacity="0.21"/><circle cx="599" cy="169" r="0.6" fill="#7a9ab8" fill-opacity="0.28"/><circle cx="713" cy="205" r="0.7" fill="#d0d8e0" fill-opacity="0.23"/><circle cx="1080" cy="470" r="0.9" fill="#b8c8d8" fill-opacity="0.40"/><circle cx="729" cy="605" r="0.8" fill="#6f8faf" fill-opacity="0.52"/><circle cx="1064" cy="149" r="0.5" fill="#6f8faf" fill-opacity="0.36"/><circle cx="485" cy="644" r="0.5" fill="#6f8faf" fill-opacity="0.35"/><circle cx="861" cy="593" r="0.6" fill="#6f8faf" fill-opacity="0.47"/><circle cx="515" cy="485" r="0.5" fill="#d0d8e0" fill-opacity="0.50"/><circle cx="1048" cy="153" r="0.8" fill="#7a9ab8" fill-opacity="0.39"/><circle cx="794" cy="330" r="0.5" fill="#8fa8c0" fill-opacity="0.41"/><circle cx="280" cy="196" r="0.7" fill="#6f8faf" fill-opacity="0.51"/><circle cx="548" cy="510" r="0.9" fill="#d0d8e0" fill-opacity="0.35"/><circle cx="953" cy="180" r="0.9" fill="#7a9ab8" fill-opacity="0.19"/><circle cx="277" cy="149" r="0.5" fill="#7a9ab8" fill-opacity="0.36"/><circle cx="792" cy="384" r="0.5" fill="#b8c8d8" fill-opacity="0.32"/><circle cx="808" cy="241" r="0.6" fill="#6f8faf" fill-opacity="0.46"/><circle cx="792" cy="362" r="0.6" fill="#6f8faf" fill-opacity="0.30"/><circle cx="377" cy="356" r="0.6" fill="#d0d8e0" fill-opacity="0.51"/><circle cx="396" cy="604" r="0.6" fill="#d0d8e0" fill-opacity="0.23"/><circle cx="514" cy="591" r="0.5" fill="#6f8faf" fill-opacity="0.44"/><circle cx="938" cy="195" r="0.8" fill="#b8c8d8" fill-opacity="0.28"/><circle cx="946" cy="332" r="0.9" fill="#6f8faf" fill-opacity="0.36"/><circle cx="843" cy="564" r="0.9" fill="#8fa8c0" fill-opacity="0.35"/><circle cx="944" cy="279" r="0.9" fill="#6f8faf" fill-opacity="0.20"/><circle cx="712" cy="294" r="0.9" fill="#b8c8d8" fill-opacity="0.19"/><circle cx="563" cy="234" r="0.7" fill="#b8c8d8" fill-opacity="0.27"/><circle cx="915" cy="636" r="0.5" fill="#7a9ab8" fill-opacity="0.35"/><circle cx="788" cy="547" r="0.5" fill="#b8c8d8" fill-opacity="0.43"/><circle cx="939" cy="268" r="0.5" fill="#7a9ab8" fill-opacity="0.46"/><circle cx="841" cy="229" r="0.7" fill="#7a9ab8" fill-opacity="0.47"/><circle cx="826" cy="401" r="0.9" fill="#b8c8d8" fill-opacity="0.55"/><circle cx="552" cy="539" r="0.6" fill="#d0d8e0" fill-opacity="0.21"/><circle cx="315" cy="367" r="0.5" fill="#7a9ab8" fill-opacity="0.32"/><circle cx="785" cy="392" r="0.7" fill="#b8c8d8" fill-opacity="0.35"/><circle cx="287" cy="576" r="0.5" fill="#d0d8e0" fill-opacity="0.26"/><circle cx="1080" cy="633" r="0.9" fill="#6f8faf" fill-opacity="0.54"/><circle cx="434" cy="501" r="0.5" fill="#8fa8c0" fill-opacity="0.31"/><circle cx="231" cy="311" r="0.8" fill="#d0d8e0" fill-opacity="0.46"/><circle cx="1026" cy="248" r="0.5" fill="#8fa8c0" fill-opacity="0.34"/><circle cx="354" cy="308" r="0.6" fill="#7a9ab8" fill-opacity="0.35"/><circle cx="1009" cy="400" r="0.8" fill="#d0d8e0" fill-opacity="0.53"/><circle cx="719" cy="487" r="0.6" fill="#7a9ab8" fill-opacity="0.34"/><circle cx="459" cy="507" r="0.6" fill="#7a9ab8" fill-opacity="0.37"/><circle cx="429" cy="478" r="0.9" fill="#b8c8d8" fill-opacity="0.26"/><circle cx="1070" cy="403" r="0.9" fill="#d0d8e0" fill-opacity="0.36"/><circle cx="680" cy="393" r="0.9" fill="#7a9ab8" fill-opacity="0.32"/><circle cx="1070" cy="399" r="0.8" fill="#7a9ab8" fill-opacity="0.38"/><circle cx="308" cy="185" r="0.6" fill="#7a9ab8" fill-opacity="0.20"/><circle cx="611" cy="604" r="0.8" fill="#d0d8e0" fill-opacity="0.28"/><circle cx="642" cy="310" r="0.8" fill="#8fa8c0" fill-opacity="0.37"/><circle cx="370" cy="451" r="0.7" fill="#8fa8c0" fill-opacity="0.23"/><circle cx="230" cy="217" r="0.5" fill="#6f8faf" fill-opacity="0.43"/><circle cx="849" cy="262" r="0.8" fill="#7a9ab8" fill-opacity="0.22"/><circle cx="309" cy="396" r="0.7" fill="#7a9ab8" fill-opacity="0.45"/><circle cx="989" cy="150" r="0.8" fill="#7a9ab8" fill-opacity="0.49"/><circle cx="342" cy="241" r="0.9" fill="#7a9ab8" fill-opacity="0.42"/><circle cx="393" cy="413" r="0.9" fill="#b8c8d8" fill-opacity="0.50"/><circle cx="1021" cy="456" r="0.7" fill="#6f8faf" fill-opacity="0.51"/><circle cx="741" cy="589" r="0.6" fill="#b8c8d8" fill-opacity="0.26"/><circle cx="997" cy="206" r="0.6" fill="#8fa8c0" fill-opacity="0.23"/><circle cx="432" cy="187" r="0.8" fill="#b8c8d8" fill-opacity="0.38"/><circle cx="379" cy="456" r="0.5" fill="#7a9ab8" fill-opacity="0.22"/><circle cx="812" cy="599" r="0.7" fill="#7a9ab8" fill-opacity="0.22"/><circle cx="769" cy="312" r="0.6" fill="#d0d8e0" fill-opacity="0.48"/><circle cx="294" cy="157" r="0.9" fill="#7a9ab8" fill-opacity="0.41"/><circle cx="631" cy="234" r="0.5" fill="#b8c8d8" fill-opacity="0.26"/><circle cx="1089" cy="607" r="0.5" fill="#b8c8d8" fill-opacity="0.39"/><circle cx="1054" cy="372" r="0.5" fill="#d0d8e0" fill-opacity="0.30"/><circle cx="582" cy="317" r="0.6" fill="#8fa8c0" fill-opacity="0.40"/><circle cx="769" cy="159" r="0.6" fill="#d0d8e0" fill-opacity="0.25"/><circle cx="522" cy="325" r="0.6" fill="#8fa8c0" fill-opacity="0.40"/><circle cx="659" cy="146" r="0.5" fill="#d0d8e0" fill-opacity="0.48"/><circle cx="711" cy="235" r="0.9" fill="#6f8faf" fill-opacity="0.54"/><circle cx="450" cy="197" r="0.6" fill="#d0d8e0" fill-opacity="0.48"/><circle cx="318" cy="305" r="0.9" fill="#d0d8e0" fill-opacity="0.44"/><circle cx="887" cy="343" r="0.6" fill="#6f8faf" fill-opacity="0.21"/><circle cx="470" cy="189" r="0.7" fill="#7a9ab8" fill-opacity="0.55"/><circle cx="243" cy="276" r="0.7" fill="#d0d8e0" fill-opacity="0.30"/><circle cx="711" cy="408" r="0.8" fill="#d0d8e0" fill-opacity="0.37"/><circle cx="776" cy="493" r="0.8" fill="#8fa8c0" fill-opacity="0.54"/><circle cx="301" cy="193" r="0.6" fill="#d0d8e0" fill-opacity="0.27"/><circle cx="652" cy="523" r="0.8" fill="#6f8faf" fill-opacity="0.18"/><circle cx="424" cy="596" r="0.9" fill="#d0d8e0" fill-opacity="0.38"/><circle cx="1068" cy="425" r="0.5" fill="#8fa8c0" fill-opacity="0.42"/><circle cx="692" cy="476" r="0.5" fill="#b8c8d8" fill-opacity="0.32"/><circle cx="545" cy="629" r="0.8" fill="#7a9ab8" fill-opacity="0.38"/><circle cx="251" cy="616" r="0.8" fill="#d0d8e0" fill-opacity="0.29"/><circle cx="736" cy="323" r="0.7" fill="#6f8faf" fill-opacity="0.36"/><circle cx="703" cy="281" r="0.7" fill="#b8c8d8" fill-opacity="0.19"/><circle cx="725" cy="458" r="0.8" fill="#d0d8e0" fill-opacity="0.46"/><circle cx="246" cy="297" r="0.8" fill="#6f8faf" fill-opacity="0.20"/><circle cx="264" cy="596" r="0.8" fill="#6f8faf" fill-opacity="0.45"/><circle cx="1074" cy="261" r="0.9" fill="#d0d8e0" fill-opacity="0.22"/><circle cx="328" cy="624" r="0.6" fill="#8fa8c0" fill-opacity="0.40"/><circle cx="243" cy="349" r="0.5" fill="#8fa8c0" fill-opacity="0.26"/><circle cx="519" cy="216" r="0.7" fill="#d0d8e0" fill-opacity="0.34"/><circle cx="608" cy="271" r="0.9" fill="#6f8faf" fill-opacity="0.43"/><circle cx="898" cy="407" r="0.6" fill="#b8c8d8" fill-opacity="0.53"/><circle cx="413" cy="196" r="0.7" fill="#7a9ab8" fill-opacity="0.47"/><circle cx="960" cy="277" r="0.9" fill="#7a9ab8" fill-opacity="0.43"/><circle cx="827" cy="234" r="0.7" fill="#b8c8d8" fill-opacity="0.46"/><circle cx="1055" cy="392" r="0.6" fill="#8fa8c0" fill-opacity="0.51"/><circle cx="764" cy="143" r="0.7" fill="#7a9ab8" fill-opacity="0.34"/><circle cx="232" cy="251" r="0.7" fill="#8fa8c0" fill-opacity="0.21"/><circle cx="1020" cy="219" r="0.6" fill="#6f8faf" fill-opacity="0.41"/><circle cx="634" cy="317" r="0.7" fill="#b8c8d8" fill-opacity="0.31"/><circle cx="953" cy="176" r="0.5" fill="#7a9ab8" fill-opacity="0.35"/><circle cx="952" cy="527" r="0.8" fill="#6f8faf" fill-opacity="0.34"/><circle cx="549" cy="214" r="0.6" fill="#7a9ab8" fill-opacity="0.42"/><circle cx="491" cy="416" r="0.6" fill="#6f8faf" fill-opacity="0.34"/><circle cx="721" cy="372" r="0.7" fill="#8fa8c0" fill-opacity="0.21"/><circle cx="587" cy="425" r="0.8" fill="#8fa8c0" fill-opacity="0.29"/><circle cx="266" cy="246" r="0.9" fill="#6f8faf" fill-opacity="0.21"/><circle cx="643" cy="525" r="0.7" fill="#b8c8d8" fill-opacity="0.28"/><circle cx="395" cy="471" r="0.7" fill="#8fa8c0" fill-opacity="0.32"/><circle cx="488" cy="361" r="0.9" fill="#6f8faf" fill-opacity="0.52"/><circle cx="592" cy="544" r="0.7" fill="#b8c8d8" fill-opacity="0.35"/><circle cx="558" cy="611" r="0.9" fill="#6f8faf" fill-opacity="0.27"/><circle cx="944" cy="150" r="0.8" fill="#b8c8d8" fill-opacity="0.40"/><circle cx="863" cy="324" r="0.8" fill="#7a9ab8" fill-opacity="0.38"/><circle cx="705" cy="227" r="0.8" fill="#6f8faf" fill-opacity="0.51"/><circle cx="929" cy="250" r="0.5" fill="#7a9ab8" fill-opacity="0.38"/><circle cx="464" cy="149" r="0.8" fill="#7a9ab8" fill-opacity="0.20"/><circle cx="473" cy="414" r="0.7" fill="#8fa8c0" fill-opacity="0.21"/><circle cx="1007" cy="181" r="0.6" fill="#d0d8e0" fill-opacity="0.22"/><circle cx="419" cy="250" r="0.9" fill="#d0d8e0" fill-opacity="0.31"/><circle cx="553" cy="309" r="0.7" fill="#d0d8e0" fill-opacity="0.43"/><circle cx="637" cy="545" r="0.5" fill="#8fa8c0" fill-opacity="0.44"/><circle cx="568" cy="556" r="0.7" fill="#d0d8e0" fill-opacity="0.50"/><circle cx="948" cy="588" r="0.9" fill="#7a9ab8" fill-opacity="0.42"/><circle cx="524" cy="143" r="0.5" fill="#d0d8e0" fill-opacity="0.34"/><circle cx="1022" cy="262" r="0.6" fill="#d0d8e0" fill-opacity="0.55"/><circle cx="814" cy="300" r="0.8" fill="#6f8faf" fill-opacity="0.34"/><circle cx="445" cy="586" r="0.8" fill="#8fa8c0" fill-opacity="0.29"/><circle cx="471" cy="217" r="0.6" fill="#d0d8e0" fill-opacity="0.52"/><circle cx="213" cy="381" r="0.5" fill="#b8c8d8" fill-opacity="0.30"/><circle cx="364" cy="248" r="0.6" fill="#d0d8e0" fill-opacity="0.40"/><circle cx="733" cy="251" r="0.6" fill="#d0d8e0" fill-opacity="0.51"/><circle cx="353" cy="521" r="0.7" fill="#7a9ab8" fill-opacity="0.41"/><circle cx="630" cy="270" r="0.8" fill="#6f8faf" fill-opacity="0.52"/><circle cx="792" cy="528" r="0.5" fill="#b8c8d8" fill-opacity="0.36"/><circle cx="557" cy="248" r="0.6" fill="#d0d8e0" fill-opacity="0.48"/><circle cx="1076" cy="540" r="0.7" fill="#8fa8c0" fill-opacity="0.47"/><circle cx="790" cy="258" r="0.5" fill="#6f8faf" fill-opacity="0.50"/><circle cx="603" cy="263" r="0.8" fill="#b8c8d8" fill-opacity="0.40"/><circle cx="572" cy="529" r="0.6" fill="#7a9ab8" fill-opacity="0.28"/><circle cx="316" cy="513" r="0.9" fill="#7a9ab8" fill-opacity="0.28"/><circle cx="246" cy="427" r="0.6" fill="#b8c8d8" fill-opacity="0.18"/><circle cx="938" cy="180" r="0.7" fill="#7a9ab8" fill-opacity="0.41"/><circle cx="285" cy="381" r="0.8" fill="#7a9ab8" fill-opacity="0.21"/><circle cx="687" cy="394" r="0.5" fill="#d0d8e0" fill-opacity="0.47"/><circle cx="372" cy="483" r="0.8" fill="#7a9ab8" fill-opacity="0.26"/><circle cx="570" cy="388" r="0.7" fill="#d0d8e0" fill-opacity="0.30"/><circle cx="266" cy="293" r="0.8" fill="#8fa8c0" fill-opacity="0.43"/><circle cx="522" cy="486" r="0.5" fill="#d0d8e0" fill-opacity="0.43"/><circle cx="870" cy="535" r="0.5" fill="#8fa8c0" fill-opacity="0.42"/><circle cx="975" cy="498" r="0.8" fill="#7a9ab8" fill-opacity="0.27"/><circle cx="300" cy="529" r="0.6" fill="#b8c8d8" fill-opacity="0.51"/><circle cx="459" cy="328" r="0.9" fill="#6f8faf" fill-opacity="0.46"/><circle cx="877" cy="419" r="0.5" fill="#b8c8d8" fill-opacity="0.27"/><circle cx="537" cy="193" r="0.7" fill="#7a9ab8" fill-opacity="0.53"/><circle cx="621" cy="462" r="0.8" fill="#8fa8c0" fill-opacity="0.49"/><circle cx="290" cy="453" r="0.6" fill="#b8c8d8" fill-opacity="0.43"/><circle cx="360" cy="342" r="0.8" fill="#8fa8c0" fill-opacity="0.40"/><circle cx="288" cy="154" r="0.5" fill="#8fa8c0" fill-opacity="0.34"/><circle cx="505" cy="555" r="0.9" fill="#b8c8d8" fill-opacity="0.23"/><circle cx="888" cy="553" r="0.8" fill="#d0d8e0" fill-opacity="0.36"/><circle cx="759" cy="506" r="0.9" fill="#b8c8d8" fill-opacity="0.44"/><circle cx="792" cy="446" r="0.5" fill="#b8c8d8" fill-opacity="0.28"/><circle cx="506" cy="467" r="0.5" fill="#b8c8d8" fill-opacity="0.39"/><circle cx="656" cy="537" r="0.5" fill="#b8c8d8" fill-opacity="0.41"/><circle cx="426" cy="411" r="0.7" fill="#6f8faf" fill-opacity="0.38"/><circle cx="749" cy="398" r="0.9" fill="#7a9ab8" fill-opacity="0.44"/><circle cx="1097" cy="496" r="0.6" fill="#8fa8c0" fill-opacity="0.39"/><circle cx="762" cy="238" r="0.5" fill="#d0d8e0" fill-opacity="0.23"/><circle cx="717" cy="491" r="0.7" fill="#6f8faf" fill-opacity="0.21"/><circle cx="438" cy="585" r="0.8" fill="#b8c8d8" fill-opacity="0.54"/><circle cx="413" cy="426" r="0.9" fill="#7a9ab8" fill-opacity="0.39"/><circle cx="1022" cy="223" r="0.7" fill="#8fa8c0" fill-opacity="0.40"/><circle cx="1039" cy="140" r="0.7" fill="#7a9ab8" fill-opacity="0.27"/><circle cx="525" cy="222" r="0.9" fill="#8fa8c0" fill-opacity="0.38"/><circle cx="607" cy="342" r="0.6" fill="#d0d8e0" fill-opacity="0.29"/><circle cx="752" cy="462" r="0.5" fill="#d0d8e0" fill-opacity="0.24"/><circle cx="619" cy="210" r="0.8" fill="#d0d8e0" fill-opacity="0.22"/><circle cx="354" cy="401" r="0.7" fill="#6f8faf" fill-opacity="0.27"/><circle cx="246" cy="535" r="0.6" fill="#d0d8e0" fill-opacity="0.33"/><circle cx="738" cy="376" r="0.8" fill="#7a9ab8" fill-opacity="0.51"/><circle cx="880" cy="518" r="0.8" fill="#d0d8e0" fill-opacity="0.51"/><circle cx="952" cy="571" r="0.8" fill="#8fa8c0" fill-opacity="0.49"/><circle cx="707" cy="596" r="0.9" fill="#7a9ab8" fill-opacity="0.30"/><circle cx="587" cy="596" r="0.7" fill="#6f8faf" fill-opacity="0.52"/><circle cx="851" cy="593" r="0.8" fill="#6f8faf" fill-opacity="0.40"/><circle cx="992" cy="582" r="0.6" fill="#d0d8e0" fill-opacity="0.23"/><circle cx="416" cy="580" r="0.5" fill="#8fa8c0" fill-opacity="0.36"/><circle cx="672" cy="259" r="0.7" fill="#b8c8d8" fill-opacity="0.42"/><circle cx="990" cy="644" r="0.7" fill="#d0d8e0" fill-opacity="0.50"/><circle cx="706" cy="221" r="0.8" fill="#8fa8c0" fill-opacity="0.39"/><circle cx="287" cy="539" r="0.5" fill="#7a9ab8" fill-opacity="0.51"/><circle cx="1054" cy="138" r="0.6" fill="#8fa8c0" fill-opacity="0.45"/><circle cx="490" cy="170" r="0.8" fill="#d0d8e0" fill-opacity="0.48"/><circle cx="325" cy="488" r="0.6" fill="#8fa8c0" fill-opacity="0.20"/><circle cx="607" cy="297" r="0.7" fill="#d0d8e0" fill-opacity="0.36"/><circle cx="989" cy="241" r="0.5" fill="#6f8faf" fill-opacity="0.25"/><circle cx="1007" cy="146" r="0.9" fill="#b8c8d8" fill-opacity="0.25"/><circle cx="370" cy="583" r="0.5" fill="#6f8faf" fill-opacity="0.42"/><circle cx="851" cy="296" r="0.7" fill="#b8c8d8" fill-opacity="0.50"/><circle cx="499" cy="622" r="0.8" fill="#b8c8d8" fill-opacity="0.33"/><circle cx="399" cy="293" r="0.6" fill="#b8c8d8" fill-opacity="0.28"/><circle cx="649" cy="288" r="0.7" fill="#7a9ab8" fill-opacity="0.32"/><circle cx="994" cy="436" r="0.6" fill="#b8c8d8" fill-opacity="0.54"/><circle cx="798" cy="278" r="0.5" fill="#8fa8c0" fill-opacity="0.35"/><circle cx="594" cy="405" r="0.9" fill="#8fa8c0" fill-opacity="0.52"/><circle cx="738" cy="282" r="0.7" fill="#7a9ab8" fill-opacity="0.34"/><circle cx="276" cy="282" r="0.6" fill="#6f8faf" fill-opacity="0.27"/><circle cx="859" cy="153" r="0.6" fill="#8fa8c0" fill-opacity="0.55"/><circle cx="758" cy="602" r="0.9" fill="#d0d8e0" fill-opacity="0.32"/><circle cx="252" cy="170" r="0.7" fill="#d0d8e0" fill-opacity="0.30"/><circle cx="903" cy="399" r="0.9" fill="#7a9ab8" fill-opacity="0.49"/><circle cx="868" cy="407" r="0.9" fill="#b8c8d8" fill-opacity="0.47"/><circle cx="299" cy="358" r="0.8" fill="#6f8faf" fill-opacity="0.38"/><circle cx="906" cy="538" r="0.6" fill="#7a9ab8" fill-opacity="0.28"/><circle cx="397" cy="432" r="0.8" fill="#b8c8d8" fill-opacity="0.28"/><circle cx="735" cy="500" r="0.9" fill="#b8c8d8" fill-opacity="0.35"/><circle cx="491" cy="446" r="0.9" fill="#d0d8e0" fill-opacity="0.36"/><circle cx="651" cy="504" r="0.5" fill="#b8c8d8" fill-opacity="0.21"/><circle cx="710" cy="413" r="0.6" fill="#8fa8c0" fill-opacity="0.41"/><circle cx="478" cy="159" r="0.7" fill="#7a9ab8" fill-opacity="0.48"/><circle cx="901" cy="525" r="0.8" fill="#7a9ab8" fill-opacity="0.21"/><circle cx="352" cy="267" r="0.6" fill="#7a9ab8" fill-opacity="0.36"/><circle cx="906" cy="169" r="0.8" fill="#b8c8d8" fill-opacity="0.35"/><circle cx="831" cy="622" r="0.6" fill="#7a9ab8" fill-opacity="0.36"/><circle cx="1086" cy="211" r="0.8" fill="#8fa8c0" fill-opacity="0.37"/><circle cx="201" cy="345" r="0.9" fill="#d0d8e0" fill-opacity="0.23"/><circle cx="698" cy="377" r="0.5" fill="#7a9ab8" fill-opacity="0.54"/><circle cx="405" cy="266" r="0.9" fill="#d0d8e0" fill-opacity="0.50"/><circle cx="613" cy="610" r="0.7" fill="#7a9ab8" fill-opacity="0.29"/><circle cx="394" cy="219" r="0.9" fill="#8fa8c0" fill-opacity="0.42"/><circle cx="862" cy="425" r="0.9" fill="#b8c8d8" fill-opacity="0.52"/><circle cx="614" cy="337" r="0.6" fill="#8fa8c0" fill-opacity="0.32"/><circle cx="392" cy="314" r="0.6" fill="#b8c8d8" fill-opacity="0.47"/><circle cx="630" cy="341" r="0.9" fill="#6f8faf" fill-opacity="0.35"/><circle cx="623" cy="386" r="0.6" fill="#b8c8d8" fill-opacity="0.50"/><circle cx="684" cy="350" r="0.5" fill="#6f8faf" fill-opacity="0.44"/><circle cx="1052" cy="452" r="0.9" fill="#6f8faf" fill-opacity="0.25"/><circle cx="659" cy="425" r="0.6" fill="#6f8faf" fill-opacity="0.28"/><circle cx="250" cy="506" r="0.7" fill="#b8c8d8" fill-opacity="0.23"/><circle cx="849" cy="597" r="0.5" fill="#d0d8e0" fill-opacity="0.55"/><circle cx="603" cy="570" r="0.8" fill="#7a9ab8" fill-opacity="0.30"/><circle cx="800" cy="291" r="0.9" fill="#8fa8c0" fill-opacity="0.27"/><circle cx="367" cy="398" r="0.6" fill="#6f8faf" fill-opacity="0.19"/><circle cx="568" cy="380" r="0.6" fill="#7a9ab8" fill-opacity="0.37"/><circle cx="432" cy="505" r="0.8" fill="#b8c8d8" fill-opacity="0.23"/><circle cx="949" cy="409" r="0.8" fill="#d0d8e0" fill-opacity="0.33"/><circle cx="663" cy="318" r="0.5" fill="#6f8faf" fill-opacity="0.29"/><circle cx="748" cy="209" r="0.5" fill="#d0d8e0" fill-opacity="0.46"/><circle cx="707" cy="547" r="0.7" fill="#8fa8c0" fill-opacity="0.42"/><circle cx="1025" cy="247" r="0.7" fill="#6f8faf" fill-opacity="0.43"/><circle cx="409" cy="458" r="0.5" fill="#8fa8c0" fill-opacity="0.48"/><circle cx="551" cy="168" r="0.8" fill="#6f8faf" fill-opacity="0.52"/><circle cx="645" cy="280" r="0.6" fill="#b8c8d8" fill-opacity="0.52"/><circle cx="626" cy="222" r="0.6" fill="#6f8faf" fill-opacity="0.37"/><circle cx="1015" cy="545" r="0.8" fill="#7a9ab8" fill-opacity="0.40"/><circle cx="476" cy="601" r="0.8" fill="#8fa8c0" fill-opacity="0.22"/><circle cx="1019" cy="276" r="0.8" fill="#7a9ab8" fill-opacity="0.36"/><circle cx="468" cy="502" r="0.7" fill="#8fa8c0" fill-opacity="0.21"/><circle cx="510" cy="589" r="0.9" fill="#b8c8d8" fill-opacity="0.29"/><circle cx="776" cy="333" r="0.7" fill="#6f8faf" fill-opacity="0.53"/><circle cx="226" cy="496" r="0.6" fill="#8fa8c0" fill-opacity="0.47"/><circle cx="757" cy="346" r="0.8" fill="#8fa8c0" fill-opacity="0.20"/><circle cx="945" cy="583" r="0.8" fill="#d0d8e0" fill-opacity="0.54"/><circle cx="232" cy="207" r="0.9" fill="#d0d8e0" fill-opacity="0.28"/><circle cx="522" cy="632" r="0.6" fill="#6f8faf" fill-opacity="0.40"/><circle cx="404" cy="482" r="0.6" fill="#7a9ab8" fill-opacity="0.37"/><circle cx="1080" cy="140" r="0.9" fill="#7a9ab8" fill-opacity="0.36"/><circle cx="269" cy="555" r="0.7" fill="#8fa8c0" fill-opacity="0.28"/><circle cx="996" cy="297" r="0.6" fill="#b8c8d8" fill-opacity="0.44"/><circle cx="1066" cy="555" r="0.6" fill="#d0d8e0" fill-opacity="0.30"/><circle cx="922" cy="287" r="0.8" fill="#7a9ab8" fill-opacity="0.29"/><circle cx="647" cy="465" r="0.7" fill="#b8c8d8" fill-opacity="0.30"/><circle cx="1024" cy="511" r="0.5" fill="#8fa8c0" fill-opacity="0.55"/><circle cx="995" cy="295" r="0.8" fill="#d0d8e0" fill-opacity="0.37"/><circle cx="234" cy="453" r="0.8" fill="#8fa8c0" fill-opacity="0.50"/><circle cx="508" cy="339" r="0.8" fill="#6f8faf" fill-opacity="0.27"/><circle cx="529" cy="484" r="0.6" fill="#b8c8d8" fill-opacity="0.30"/><circle cx="956" cy="557" r="0.9" fill="#b8c8d8" fill-opacity="0.54"/><circle cx="759" cy="558" r="0.6" fill="#d0d8e0" fill-opacity="0.23"/><circle cx="757" cy="286" r="0.6" fill="#d0d8e0" fill-opacity="0.54"/><circle cx="725" cy="614" r="0.6" fill="#6f8faf" fill-opacity="0.28"/><circle cx="575" cy="458" r="0.8" fill="#b8c8d8" fill-opacity="0.32"/><circle cx="242" cy="499" r="0.5" fill="#b8c8d8" fill-opacity="0.50"/><circle cx="455" cy="508" r="0.5" fill="#8fa8c0" fill-opacity="0.33"/><circle cx="947" cy="571" r="0.6" fill="#6f8faf" fill-opacity="0.32"/><circle cx="593" cy="578" r="0.7" fill="#7a9ab8" fill-opacity="0.26"/><circle cx="565" cy="210" r="0.9" fill="#b8c8d8" fill-opacity="0.32"/><circle cx="689" cy="543" r="0.6" fill="#8fa8c0" fill-opacity="0.34"/><circle cx="699" cy="592" r="0.8" fill="#b8c8d8" fill-opacity="0.34"/><circle cx="489" cy="148" r="0.9" fill="#6f8faf" fill-opacity="0.39"/><circle cx="761" cy="277" r="0.6" fill="#b8c8d8" fill-opacity="0.21"/><circle cx="527" cy="269" r="0.5" fill="#8fa8c0" fill-opacity="0.24"/><circle cx="1001" cy="295" r="0.5" fill="#6f8faf" fill-opacity="0.18"/><circle cx="633" cy="643" r="0.6" fill="#d0d8e0" fill-opacity="0.55"/><circle cx="634" cy="348" r="0.9" fill="#8fa8c0" fill-opacity="0.33"/><circle cx="391" cy="450" r="0.9" fill="#b8c8d8" fill-opacity="0.27"/><circle cx="1043" cy="575" r="0.8" fill="#8fa8c0" fill-opacity="0.39"/><circle cx="356" cy="152" r="0.6" fill="#8fa8c0" fill-opacity="0.38"/><circle cx="442" cy="150" r="0.9" fill="#7a9ab8" fill-opacity="0.29"/><circle cx="617" cy="587" r="0.5" fill="#8fa8c0" fill-opacity="0.53"/><circle cx="888" cy="272" r="0.6" fill="#d0d8e0" fill-opacity="0.47"/><circle cx="557" cy="544" r="0.5" fill="#d0d8e0" fill-opacity="0.53"/><circle cx="560" cy="495" r="0.7" fill="#7a9ab8" fill-opacity="0.51"/><circle cx="219" cy="430" r="0.6" fill="#6f8faf" fill-opacity="0.30"/><circle cx="654" cy="278" r="0.7" fill="#d0d8e0" fill-opacity="0.41"/><circle cx="517" cy="279" r="0.7" fill="#6f8faf" fill-opacity="0.40"/><circle cx="499" cy="513" r="0.6" fill="#b8c8d8" fill-opacity="0.20"/><circle cx="690" cy="482" r="0.6" fill="#b8c8d8" fill-opacity="0.31"/><circle cx="327" cy="315" r="0.8" fill="#d0d8e0" fill-opacity="0.19"/><circle cx="650" cy="342" r="0.7" fill="#b8c8d8" fill-opacity="0.53"/><circle cx="217" cy="226" r="0.5" fill="#8fa8c0" fill-opacity="0.46"/><circle cx="719" cy="301" r="0.8" fill="#b8c8d8" fill-opacity="0.54"/><circle cx="647" cy="533" r="0.6" fill="#8fa8c0" fill-opacity="0.48"/><circle cx="807" cy="618" r="0.7" fill="#6f8faf" fill-opacity="0.51"/><circle cx="671" cy="143" r="0.8" fill="#8fa8c0" fill-opacity="0.52"/><circle cx="389" cy="450" r="0.8" fill="#d0d8e0" fill-opacity="0.50"/><circle cx="652" cy="425" r="0.5" fill="#d0d8e0" fill-opacity="0.22"/><circle cx="591" cy="374" r="0.8" fill="#d0d8e0" fill-opacity="0.37"/><circle cx="739" cy="428" r="0.9" fill="#7a9ab8" fill-opacity="0.52"/><circle cx="763" cy="364" r="0.9" fill="#8fa8c0" fill-opacity="0.20"/><circle cx="1036" cy="215" r="0.8" fill="#6f8faf" fill-opacity="0.30"/><circle cx="862" cy="296" r="0.8" fill="#d0d8e0" fill-opacity="0.55"/><circle cx="245" cy="628" r="0.8" fill="#b8c8d8" fill-opacity="0.22"/><circle cx="954" cy="467" r="0.6" fill="#8fa8c0" fill-opacity="0.49"/><circle cx="658" cy="641" r="0.5" fill="#8fa8c0" fill-opacity="0.25"/><circle cx="838" cy="265" r="0.7" fill="#7a9ab8" fill-opacity="0.35"/><circle cx="211" cy="354" r="0.8" fill="#b8c8d8" fill-opacity="0.28"/><circle cx="264" cy="419" r="0.8" fill="#8fa8c0" fill-opacity="0.50"/><circle cx="918" cy="571" r="0.9" fill="#8fa8c0" fill-opacity="0.54"/><circle cx="915" cy="215" r="0.7" fill="#6f8faf" fill-opacity="0.25"/><circle cx="231" cy="313" r="0.6" fill="#8fa8c0" fill-opacity="0.49"/><circle cx="572" cy="449" r="0.5" fill="#7a9ab8" fill-opacity="0.49"/><circle cx="617" cy="386" r="0.5" fill="#b8c8d8" fill-opacity="0.55"/><circle cx="677" cy="298" r="0.6" fill="#d0d8e0" fill-opacity="0.39"/><circle cx="538" cy="551" r="0.7" fill="#6f8faf" fill-opacity="0.49"/><circle cx="790" cy="244" r="0.6" fill="#b8c8d8" fill-opacity="0.25"/><circle cx="352" cy="432" r="0.5" fill="#8fa8c0" fill-opacity="0.23"/><circle cx="431" cy="312" r="0.9" fill="#b8c8d8" fill-opacity="0.31"/><circle cx="205" cy="173" r="0.6" fill="#6f8faf" fill-opacity="0.45"/><circle cx="981" cy="528" r="0.6" fill="#6f8faf" fill-opacity="0.23"/><circle cx="580" cy="553" r="0.8" fill="#b8c8d8" fill-opacity="0.28"/><circle cx="654" cy="614" r="0.7" fill="#d0d8e0" fill-opacity="0.37"/><circle cx="410" cy="431" r="0.7" fill="#6f8faf" fill-opacity="0.23"/><circle cx="1055" cy="178" r="0.8" fill="#d0d8e0" fill-opacity="0.26"/><circle cx="547" cy="514" r="0.9" fill="#8fa8c0" fill-opacity="0.26"/><circle cx="528" cy="307" r="0.9" fill="#6f8faf" fill-opacity="0.34"/><circle cx="462" cy="490" r="0.9" fill="#d0d8e0" fill-opacity="0.27"/><circle cx="535" cy="438" r="0.7" fill="#6f8faf" fill-opacity="0.32"/><circle cx="505" cy="553" r="0.9" fill="#8fa8c0" fill-opacity="0.22"/><circle cx="606" cy="244" r="0.7" fill="#8fa8c0" fill-opacity="0.19"/><circle cx="849" cy="477" r="0.7" fill="#8fa8c0" fill-opacity="0.55"/><circle cx="799" cy="217" r="0.5" fill="#d0d8e0" fill-opacity="0.31"/><circle cx="653" cy="381" r="0.9" fill="#b8c8d8" fill-opacity="0.20"/><circle cx="1077" cy="640" r="0.8" fill="#b8c8d8" fill-opacity="0.34"/><circle cx="783" cy="493" r="0.5" fill="#d0d8e0" fill-opacity="0.20"/><circle cx="789" cy="538" r="0.6" fill="#7a9ab8" fill-opacity="0.37"/><circle cx="386" cy="325" r="0.6" fill="#8fa8c0" fill-opacity="0.37"/><circle cx="866" cy="180" r="0.6" fill="#7a9ab8" fill-opacity="0.53"/><circle cx="906" cy="596" r="0.8" fill="#8fa8c0" fill-opacity="0.47"/><circle cx="588" cy="217" r="0.7" fill="#8fa8c0" fill-opacity="0.50"/><circle cx="296" cy="347" r="0.9" fill="#8fa8c0" fill-opacity="0.38"/><circle cx="897" cy="186" r="0.9" fill="#8fa8c0" fill-opacity="0.39"/><circle cx="709" cy="204" r="0.5" fill="#6f8faf" fill-opacity="0.37"/><circle cx="463" cy="531" r="0.6" fill="#d0d8e0" fill-opacity="0.40"/><circle cx="247" cy="248" r="0.8" fill="#8fa8c0" fill-opacity="0.24"/><circle cx="611" cy="568" r="0.5" fill="#7a9ab8" fill-opacity="0.48"/><circle cx="337" cy="629" r="0.9" fill="#7a9ab8" fill-opacity="0.24"/><circle cx="749" cy="575" r="0.5" fill="#8fa8c0" fill-opacity="0.33"/><circle cx="404" cy="541" r="0.5" fill="#d0d8e0" fill-opacity="0.45"/><circle cx="339" cy="407" r="0.5" fill="#d0d8e0" fill-opacity="0.33"/><circle cx="469" cy="627" r="0.5" fill="#6f8faf" fill-opacity="0.32"/><circle cx="269" cy="270" r="0.5" fill="#d0d8e0" fill-opacity="0.42"/><circle cx="494" cy="385" r="0.9" fill="#7a9ab8" fill-opacity="0.53"/><circle cx="1081" cy="607" r="0.5" fill="#6f8faf" fill-opacity="0.33"/><circle cx="439" cy="441" r="0.6" fill="#d0d8e0" fill-opacity="0.32"/><circle cx="911" cy="333" r="0.8" fill="#8fa8c0" fill-opacity="0.30"/><circle cx="243" cy="561" r="0.5" fill="#d0d8e0" fill-opacity="0.24"/><circle cx="691" cy="340" r="0.6" fill="#6f8faf" fill-opacity="0.43"/><circle cx="227" cy="320" r="0.6" fill="#7a9ab8" fill-opacity="0.37"/><circle cx="637" cy="143" r="0.8" fill="#8fa8c0" fill-opacity="0.40"/><circle cx="204" cy="438" r="0.6" fill="#7a9ab8" fill-opacity="0.32"/><circle cx="822" cy="563" r="0.6" fill="#7a9ab8" fill-opacity="0.41"/><circle cx="248" cy="231" r="0.5" fill="#6f8faf" fill-opacity="0.37"/><circle cx="246" cy="185" r="0.7" fill="#d0d8e0" fill-opacity="0.40"/><circle cx="780" cy="327" r="0.5" fill="#8fa8c0" fill-opacity="0.29"/><circle cx="275" cy="636" r="0.7" fill="#6f8faf" fill-opacity="0.30"/><circle cx="332" cy="217" r="0.7" fill="#8fa8c0" fill-opacity="0.42"/><circle cx="1098" cy="386" r="0.8" fill="#7a9ab8" fill-opacity="0.41"/><circle cx="323" cy="310" r="0.5" fill="#b8c8d8" fill-opacity="0.41"/><circle cx="720" cy="141" r="0.8" fill="#8fa8c0" fill-opacity="0.33"/><circle cx="353" cy="180" r="0.6" fill="#d0d8e0" fill-opacity="0.32"/><circle cx="807" cy="543" r="0.8" fill="#8fa8c0" fill-opacity="0.30"/><circle cx="950" cy="622" r="0.7" fill="#7a9ab8" fill-opacity="0.43"/><circle cx="839" cy="494" r="0.8" fill="#7a9ab8" fill-opacity="0.29"/><circle cx="300" cy="577" r="0.5" fill="#7a9ab8" fill-opacity="0.33"/><circle cx="324" cy="617" r="0.6" fill="#d0d8e0" fill-opacity="0.50"/><circle cx="565" cy="592" r="0.8" fill="#d0d8e0" fill-opacity="0.25"/><circle cx="642" cy="487" r="0.8" fill="#d0d8e0" fill-opacity="0.37"/><circle cx="293" cy="514" r="0.6" fill="#6f8faf" fill-opacity="0.47"/><circle cx="380" cy="313" r="0.6" fill="#d0d8e0" fill-opacity="0.42"/><circle cx="730" cy="401" r="0.8" fill="#7a9ab8" fill-opacity="0.35"/><circle cx="956" cy="319" r="0.9" fill="#d0d8e0" fill-opacity="0.23"/><circle cx="493" cy="491" r="0.6" fill="#6f8faf" fill-opacity="0.41"/><circle cx="855" cy="429" r="0.7" fill="#6f8faf" fill-opacity="0.52"/><circle cx="538" cy="501" r="0.8" fill="#8fa8c0" fill-opacity="0.52"/><circle cx="702" cy="632" r="0.9" fill="#d0d8e0" fill-opacity="0.35"/><circle cx="304" cy="232" r="0.9" fill="#6f8faf" fill-opacity="0.22"/><circle cx="649" cy="214" r="0.7" fill="#7a9ab8" fill-opacity="0.39"/><circle cx="639" cy="386" r="0.8" fill="#6f8faf" fill-opacity="0.53"/><circle cx="923" cy="187" r="0.6" fill="#b8c8d8" fill-opacity="0.26"/><circle cx="973" cy="511" r="0.7" fill="#b8c8d8" fill-opacity="0.22"/><circle cx="722" cy="593" r="0.7" fill="#6f8faf" fill-opacity="0.44"/><circle cx="296" cy="537" r="0.7" fill="#6f8faf" fill-opacity="0.41"/><circle cx="297" cy="319" r="0.6" fill="#6f8faf" fill-opacity="0.38"/><circle cx="799" cy="283" r="0.9" fill="#d0d8e0" fill-opacity="0.23"/><circle cx="266" cy="153" r="0.7" fill="#b8c8d8" fill-opacity="0.53"/><circle cx="984" cy="219" r="0.9" fill="#7a9ab8" fill-opacity="0.50"/><circle cx="278" cy="543" r="0.6" fill="#7a9ab8" fill-opacity="0.38"/><circle cx="896" cy="269" r="0.5" fill="#6f8faf" fill-opacity="0.34"/><circle cx="785" cy="413" r="0.8" fill="#6f8faf" fill-opacity="0.35"/><circle cx="509" cy="247" r="0.9" fill="#6f8faf" fill-opacity="0.28"/><circle cx="995" cy="176" r="0.9" fill="#8fa8c0" fill-opacity="0.22"/><circle cx="470" cy="139" r="0.9" fill="#b8c8d8" fill-opacity="0.54"/><circle cx="1088" cy="295" r="0.6" fill="#8fa8c0" fill-opacity="0.20"/><circle cx="325" cy="347" r="0.6" fill="#7a9ab8" fill-opacity="0.54"/><circle cx="686" cy="359" r="0.6" fill="#6f8faf" fill-opacity="0.21"/><circle cx="749" cy="606" r="0.5" fill="#d0d8e0" fill-opacity="0.33"/><circle cx="372" cy="489" r="0.5" fill="#7a9ab8" fill-opacity="0.39"/><circle cx="278" cy="593" r="0.7" fill="#6f8faf" fill-opacity="0.30"/><circle cx="1043" cy="632" r="0.6" fill="#8fa8c0" fill-opacity="0.50"/><circle cx="746" cy="540" r="0.9" fill="#7a9ab8" fill-opacity="0.41"/><circle cx="483" cy="224" r="0.9" fill="#8fa8c0" fill-opacity="0.24"/><circle cx="296" cy="289" r="0.7" fill="#8fa8c0" fill-opacity="0.53"/><circle cx="571" cy="213" r="0.6" fill="#7a9ab8" fill-opacity="0.43"/><circle cx="960" cy="526" r="0.5" fill="#8fa8c0" fill-opacity="0.18"/><circle cx="1060" cy="247" r="0.8" fill="#d0d8e0" fill-opacity="0.49"/><circle cx="514" cy="249" r="0.8" fill="#b8c8d8" fill-opacity="0.19"/><circle cx="434" cy="434" r="0.9" fill="#7a9ab8" fill-opacity="0.45"/><circle cx="805" cy="368" r="0.6" fill="#d0d8e0" fill-opacity="0.52"/><circle cx="356" cy="214" r="0.7" fill="#b8c8d8" fill-opacity="0.35"/><circle cx="903" cy="306" r="0.6" fill="#7a9ab8" fill-opacity="0.43"/><circle cx="432" cy="403" r="0.7" fill="#8fa8c0" fill-opacity="0.39"/><circle cx="364" cy="256" r="0.7" fill="#b8c8d8" fill-opacity="0.37"/><circle cx="805" cy="538" r="0.9" fill="#7a9ab8" fill-opacity="0.21"/><circle cx="418" cy="248" r="0.8" fill="#b8c8d8" fill-opacity="0.39"/><circle cx="532" cy="318" r="0.5" fill="#d0d8e0" fill-opacity="0.55"/><circle cx="1098" cy="350" r="0.6" fill="#b8c8d8" fill-opacity="0.31"/><circle cx="540" cy="283" r="0.9" fill="#8fa8c0" fill-opacity="0.53"/><circle cx="626" cy="552" r="0.5" fill="#8fa8c0" fill-opacity="0.20"/><circle cx="540" cy="171" r="0.6" fill="#b8c8d8" fill-opacity="0.23"/><circle cx="342" cy="387" r="0.6" fill="#6f8faf" fill-opacity="0.52"/><circle cx="323" cy="207" r="0.7" fill="#b8c8d8" fill-opacity="0.53"/><circle cx="412" cy="493" r="0.6" fill="#d0d8e0" fill-opacity="0.51"/><circle cx="529" cy="506" r="0.7" fill="#8fa8c0" fill-opacity="0.23"/><circle cx="1083" cy="505" r="0.5" fill="#6f8faf" fill-opacity="0.23"/><circle cx="363" cy="200" r="0.9" fill="#7a9ab8" fill-opacity="0.37"/><circle cx="596" cy="545" r="0.7" fill="#8fa8c0" fill-opacity="0.53"/><circle cx="786" cy="146" r="0.7" fill="#7a9ab8" fill-opacity="0.54"/><circle cx="365" cy="626" r="0.9" fill="#d0d8e0" fill-opacity="0.22"/><circle cx="912" cy="630" r="0.8" fill="#d0d8e0" fill-opacity="0.31"/><circle cx="617" cy="235" r="0.8" fill="#8fa8c0" fill-opacity="0.54"/><circle cx="593" cy="434" r="0.9" fill="#b8c8d8" fill-opacity="0.20"/><circle cx="239" cy="341" r="0.6" fill="#8fa8c0" fill-opacity="0.54"/><circle cx="396" cy="542" r="0.8" fill="#8fa8c0" fill-opacity="0.41"/><circle cx="617" cy="230" r="0.5" fill="#8fa8c0" fill-opacity="0.24"/><circle cx="501" cy="567" r="0.9" fill="#d0d8e0" fill-opacity="0.32"/><circle cx="424" cy="514" r="0.6" fill="#7a9ab8" fill-opacity="0.31"/><circle cx="721" cy="349" r="0.9" fill="#6f8faf" fill-opacity="0.40"/><circle cx="497" cy="600" r="0.6" fill="#7a9ab8" fill-opacity="0.43"/><circle cx="966" cy="584" r="0.6" fill="#7a9ab8" fill-opacity="0.35"/><circle cx="1084" cy="284" r="0.6" fill="#6f8faf" fill-opacity="0.53"/><circle cx="410" cy="433" r="0.6" fill="#6f8faf" fill-opacity="0.44"/><circle cx="454" cy="187" r="0.5" fill="#7a9ab8" fill-opacity="0.31"/><circle cx="299" cy="515" r="0.9" fill="#8fa8c0" fill-opacity="0.42"/><circle cx="794" cy="341" r="0.8" fill="#7a9ab8" fill-opacity="0.39"/><circle cx="614" cy="184" r="0.8" fill="#8fa8c0" fill-opacity="0.42"/><circle cx="775" cy="629" r="0.7" fill="#8fa8c0" fill-opacity="0.38"/><circle cx="274" cy="543" r="0.6" fill="#d0d8e0" fill-opacity="0.40"/><circle cx="916" cy="267" r="0.9" fill="#6f8faf" fill-opacity="0.22"/><circle cx="698" cy="617" r="0.8" fill="#b8c8d8" fill-opacity="0.50"/><circle cx="460" cy="564" r="0.9" fill="#b8c8d8" fill-opacity="0.37"/><circle cx="780" cy="487" r="0.8" fill="#b8c8d8" fill-opacity="0.48"/><circle cx="642" cy="527" r="0.5" fill="#a8b8c8" fill-opacity="0.39"/><circle cx="676" cy="265" r="0.5" fill="#a8b8c8" fill-opacity="0.24"/><circle cx="787" cy="286" r="0.6" fill="#c0a8b0" fill-opacity="0.25"/><circle cx="544" cy="440" r="0.5" fill="#c0a8b0" fill-opacity="0.43"/><circle cx="610" cy="600" r="0.5" fill="#8fa0b8" fill-opacity="0.44"/><circle cx="694" cy="369" r="0.4" fill="#8fa0b8" fill-opacity="0.33"/><circle cx="548" cy="627" r="0.6" fill="#8fa0b8" fill-opacity="0.35"/><circle cx="572" cy="581" r="0.5" fill="#a8b8c8" fill-opacity="0.39"/><circle cx="700" cy="499" r="0.5" fill="#c0a8b0" fill-opacity="0.22"/><circle cx="669" cy="378" r="0.4" fill="#8fa0b8" fill-opacity="0.42"/><circle cx="609" cy="564" r="0.4" fill="#c0a8b0" fill-opacity="0.36"/><circle cx="732" cy="448" r="0.5" fill="#a8b8c8" fill-opacity="0.23"/><circle cx="747" cy="257" r="0.4" fill="#a8b8c8" fill-opacity="0.25"/><circle cx="646" cy="641" r="0.5" fill="#c0a8b0" fill-opacity="0.31"/><circle cx="703" cy="526" r="0.5" fill="#a8b8c8" fill-opacity="0.18"/><circle cx="639" cy="446" r="0.5" fill="#a8b8c8" fill-opacity="0.17"/><circle cx="543" cy="564" r="0.6" fill="#8fa0b8" fill-opacity="0.31"/><circle cx="710" cy="323" r="0.6" fill="#8fa0b8" fill-opacity="0.26"/><circle cx="706" cy="384" r="0.5" fill="#c0a8b0" fill-opacity="0.24"/><circle cx="659" cy="460" r="0.4" fill="#a8b8c8" fill-opacity="0.27"/><circle cx="616" cy="565" r="0.5" fill="#c0a8b0" fill-opacity="0.28"/><circle cx="669" cy="408" r="0.6" fill="#c0a8b0" fill-opacity="0.32"/><circle cx="478" cy="561" r="0.6" fill="#a8b8c8" fill-opacity="0.31"/><circle cx="654" cy="456" r="0.4" fill="#a8b8c8" fill-opacity="0.20"/><circle cx="680" cy="512" r="0.6" fill="#8fa0b8" fill-opacity="0.33"/><circle cx="803" cy="404" r="0.6" fill="#a8b8c8" fill-opacity="0.16"/><circle cx="651" cy="419" r="0.5" fill="#8fa0b8" fill-opacity="0.21"/><circle cx="590" cy="601" r="0.4" fill="#a8b8c8" fill-opacity="0.32"/><circle cx="691" cy="348" r="0.4" fill="#8fa0b8" fill-opacity="0.45"/><circle cx="605" cy="453" r="0.6" fill="#c0a8b0" fill-opacity="0.22"/><circle cx="739" cy="357" r="0.4" fill="#a8b8c8" fill-opacity="0.36"/><circle cx="680" cy="330" r="0.6" fill="#a8b8c8" fill-opacity="0.29"/><circle cx="681" cy="398" r="0.6" fill="#a8b8c8" fill-opacity="0.18"/><circle cx="525" cy="549" r="0.5" fill="#8fa0b8" fill-opacity="0.45"/><circle cx="551" cy="599" r="0.4" fill="#c0a8b0" fill-opacity="0.22"/><circle cx="631" cy="434" r="0.5" fill="#a8b8c8" fill-opacity="0.37"/><circle cx="725" cy="359" r="0.5" fill="#c0a8b0" fill-opacity="0.21"/><circle cx="612" cy="389" r="0.5" fill="#a8b8c8" fill-opacity="0.28"/><circle cx="606" cy="478" r="0.4" fill="#8fa0b8" fill-opacity="0.29"/><circle cx="653" cy="503" r="0.6" fill="#8fa0b8" fill-opacity="0.29"/><circle cx="553" cy="478" r="0.5" fill="#a8b8c8" fill-opacity="0.42"/><circle cx="610" cy="538" r="0.5" fill="#c0a8b0" fill-opacity="0.22"/><circle cx="537" cy="603" r="0.5" fill="#8fa0b8" fill-opacity="0.21"/><circle cx="665" cy="313" r="0.4" fill="#c0a8b0" fill-opacity="0.31"/><circle cx="690" cy="382" r="0.5" fill="#8fa0b8" fill-opacity="0.25"/><circle cx="701" cy="348" r="0.6" fill="#8fa0b8" fill-opacity="0.26"/><circle cx="764" cy="400" r="0.5" fill="#c0a8b0" fill-opacity="0.17"/><circle cx="731" cy="261" r="0.4" fill="#8fa0b8" fill-opacity="0.40"/><circle cx="809" cy="308" r="0.5" fill="#c0a8b0" fill-opacity="0.37"/><circle cx="656" cy="432" r="0.5" fill="#c0a8b0" fill-opacity="0.36"/><circle cx="683" cy="412" r="0.6" fill="#c0a8b0" fill-opacity="0.25"/><circle cx="666" cy="452" r="0.4" fill="#c0a8b0" fill-opacity="0.23"/><circle cx="725" cy="401" r="0.6" fill="#8fa0b8" fill-opacity="0.39"/><circle cx="617" cy="503" r="0.5" fill="#8fa0b8" fill-opacity="0.42"/><circle cx="635" cy="519" r="0.5" fill="#8fa0b8" fill-opacity="0.31"/><circle cx="653" cy="476" r="0.5" fill="#a8b8c8" fill-opacity="0.26"/><circle cx="726" cy="270" r="0.6" fill="#a8b8c8" fill-opacity="0.26"/><circle cx="742" cy="428" r="0.5" fill="#c0a8b0" fill-opacity="0.19"/><circle cx="691" cy="479" r="0.6" fill="#8fa0b8" fill-opacity="0.27"/><circle cx="641" cy="497" r="0.6" fill="#a8b8c8" fill-opacity="0.22"/><circle cx="803" cy="285" r="0.4" fill="#8fa0b8" fill-opacity="0.37"/><circle cx="725" cy="243" r="0.4" fill="#a8b8c8" fill-opacity="0.36"/><circle cx="618" cy="505" r="0.6" fill="#c0a8b0" fill-opacity="0.36"/><circle cx="730" cy="393" r="0.4" fill="#c0a8b0" fill-opacity="0.40"/><circle cx="629" cy="337" r="0.6" fill="#c0a8b0" fill-opacity="0.23"/><circle cx="589" cy="648" r="0.4" fill="#c0a8b0" fill-opacity="0.31"/><circle cx="697" cy="523" r="0.5" fill="#8fa0b8" fill-opacity="0.39"/><circle cx="809" cy="361" r="0.4" fill="#c0a8b0" fill-opacity="0.42"/><circle cx="553" cy="520" r="0.5" fill="#8fa0b8" fill-opacity="0.21"/><circle cx="595" cy="595" r="0.4" fill="#a8b8c8" fill-opacity="0.29"/><circle cx="712" cy="338" r="0.6" fill="#c0a8b0" fill-opacity="0.37"/><circle cx="639" cy="456" r="0.6" fill="#8fa0b8" fill-opacity="0.16"/><circle cx="681" cy="231" r="0.6" fill="#8fa0b8" fill-opacity="0.31"/><circle cx="840" cy="322" r="0.4" fill="#c0a8b0" fill-opacity="0.28"/><circle cx="626" cy="484" r="0.4" fill="#8fa0b8" fill-opacity="0.36"/><circle cx="745" cy="269" r="0.5" fill="#a8b8c8" fill-opacity="0.22"/><circle cx="670" cy="379" r="0.5" fill="#a8b8c8" fill-opacity="0.24"/><circle cx="780" cy="268" r="0.5" fill="#a8b8c8" fill-opacity="0.27"/><circle cx="765" cy="385" r="0.5" fill="#a8b8c8" fill-opacity="0.35"/><circle cx="748" cy="398" r="0.6" fill="#8fa0b8" fill-opacity="0.39"/><circle cx="580" cy="499" r="0.5" fill="#8fa0b8" fill-opacity="0.26"/><circle cx="666" cy="433" r="0.6" fill="#a8b8c8" fill-opacity="0.32"/><circle cx="692" cy="355" r="0.6" fill="#c0a8b0" fill-opacity="0.39"/><circle cx="707" cy="448" r="0.6" fill="#c0a8b0" fill-opacity="0.21"/><circle cx="600" cy="504" r="0.5" fill="#c0a8b0" fill-opacity="0.18"/><circle cx="588" cy="434" r="0.6" fill="#a8b8c8" fill-opacity="0.45"/><circle cx="747" cy="280" r="0.6" fill="#c0a8b0" fill-opacity="0.28"/><circle cx="805" cy="425" r="0.5" fill="#a8b8c8" fill-opacity="0.31"/><circle cx="715" cy="489" r="0.5" fill="#a8b8c8" fill-opacity="0.36"/><circle cx="723" cy="451" r="0.5" fill="#c0a8b0" fill-opacity="0.33"/><circle cx="620" cy="470" r="0.5" fill="#a8b8c8" fill-opacity="0.37"/><circle cx="613" cy="507" r="0.4" fill="#c0a8b0" fill-opacity="0.43"/><circle cx="624" cy="448" r="0.6" fill="#a8b8c8" fill-opacity="0.33"/><circle cx="761" cy="359" r="0.6" fill="#c0a8b0" fill-opacity="0.43"/><circle cx="748" cy="280" r="0.6" fill="#c0a8b0" fill-opacity="0.31"/><circle cx="687" cy="303" r="0.4" fill="#c0a8b0" fill-opacity="0.39"/><circle cx="734" cy="347" r="0.6" fill="#a8b8c8" fill-opacity="0.39"/><circle cx="634" cy="575" r="0.6" fill="#a8b8c8" fill-opacity="0.16"/><circle cx="512" cy="559" r="0.5" fill="#c0a8b0" fill-opacity="0.42"/><circle cx="632" cy="275" r="0.6" fill="#a8b8c8" fill-opacity="0.18"/><circle cx="623" cy="640" r="0.5" fill="#c0a8b0" fill-opacity="0.41"/><circle cx="724" cy="356" r="0.6" fill="#8fa0b8" fill-opacity="0.34"/><circle cx="690" cy="458" r="0.5" fill="#a8b8c8" fill-opacity="0.23"/><circle cx="619" cy="510" r="0.4" fill="#c0a8b0" fill-opacity="0.23"/><circle cx="693" cy="333" r="0.6" fill="#c0a8b0" fill-opacity="0.19"/><circle cx="701" cy="550" r="0.6" fill="#c0a8b0" fill-opacity="0.36"/><circle cx="737" cy="396" r="0.6" fill="#c0a8b0" fill-opacity="0.27"/><circle cx="711" cy="350" r="0.4" fill="#c0a8b0" fill-opacity="0.16"/><circle cx="675" cy="389" r="0.6" fill="#c0a8b0" fill-opacity="0.34"/><circle cx="744" cy="331" r="0.6" fill="#c0a8b0" fill-opacity="0.15"/><circle cx="580" cy="535" r="0.4" fill="#a8b8c8" fill-opacity="0.30"/><circle cx="733" cy="274" r="0.4" fill="#8fa0b8" fill-opacity="0.19"/><circle cx="697" cy="448" r="0.6" fill="#8fa0b8" fill-opacity="0.20"/><circle cx="569" cy="508" r="0.4" fill="#a8b8c8" fill-opacity="0.26"/><circle cx="736" cy="311" r="0.4" fill="#c0a8b0" fill-opacity="0.22"/><circle cx="693" cy="403" r="0.4" fill="#a8b8c8" fill-opacity="0.36"/><circle cx="519" cy="543" r="0.4" fill="#a8b8c8" fill-opacity="0.33"/><circle cx="650" cy="335" r="0.4" fill="#8fa0b8" fill-opacity="0.29"/><circle cx="704" cy="320" r="0.4" fill="#8fa0b8" fill-opacity="0.40"/><circle cx="659" cy="400" r="0.5" fill="#c0a8b0" fill-opacity="0.32"/><circle cx="775" cy="305" r="0.6" fill="#8fa0b8" fill-opacity="0.16"/><circle cx="574" cy="615" r="0.5" fill="#c0a8b0" fill-opacity="0.42"/><circle cx="582" cy="578" r="0.6" fill="#8fa0b8" fill-opacity="0.19"/><circle cx="632" cy="578" r="0.5" fill="#a8b8c8" fill-opacity="0.43"/><circle cx="610" cy="620" r="0.5" fill="#a8b8c8" fill-opacity="0.22"/><circle cx="628" cy="527" r="0.6" fill="#8fa0b8" fill-opacity="0.21"/><circle cx="570" cy="579" r="0.6" fill="#c0a8b0" fill-opacity="0.44"/><circle cx="703" cy="425" r="0.6" fill="#c0a8b0" fill-opacity="0.26"/><circle cx="552" cy="476" r="0.5" fill="#8fa0b8" fill-opacity="0.45"/><circle cx="590" cy="486" r="0.6" fill="#8fa0b8" fill-opacity="0.19"/><circle cx="719" cy="474" r="0.6" fill="#c0a8b0" fill-opacity="0.17"/><circle cx="681" cy="495" r="0.4" fill="#c0a8b0" fill-opacity="0.25"/><circle cx="675" cy="398" r="0.4" fill="#8fa0b8" fill-opacity="0.23"/><circle cx="718" cy="478" r="0.6" fill="#8fa0b8" fill-opacity="0.21"/><circle cx="686" cy="310" r="0.4" fill="#c0a8b0" fill-opacity="0.18"/><circle cx="747" cy="244" r="0.5" fill="#8fa0b8" fill-opacity="0.34"/><circle cx="552" cy="632" r="0.6" fill="#8fa0b8" fill-opacity="0.43"/><circle cx="713" cy="314" r="0.5" fill="#c0a8b0" fill-opacity="0.41"/><circle cx="659" cy="406" r="0.5" fill="#8fa0b8" fill-opacity="0.37"/><circle cx="689" cy="479" r="0.6" fill="#c0a8b0" fill-opacity="0.20"/><circle cx="583" cy="635" r="0.4" fill="#8fa0b8" fill-opacity="0.36"/><circle cx="730" cy="439" r="0.4" fill="#a8b8c8" fill-opacity="0.31"/><circle cx="598" cy="449" r="0.4" fill="#a8b8c8" fill-opacity="0.26"/><circle cx="639" cy="256" r="0.6" fill="#c0a8b0" fill-opacity="0.40"/><circle cx="636" cy="312" r="0.4" fill="#c0a8b0" fill-opacity="0.17"/><circle cx="776" cy="271" r="0.4" fill="#c0a8b0" fill-opacity="0.18"/><circle cx="773" cy="336" r="0.4" fill="#c0a8b0" fill-opacity="0.18"/><circle cx="614" cy="581" r="0.5" fill="#8fa0b8" fill-opacity="0.43"/><circle cx="615" cy="506" r="0.6" fill="#a8b8c8" fill-opacity="0.34"/><circle cx="505" cy="544" r="0.6" fill="#8fa0b8" fill-opacity="0.31"/><circle cx="711" cy="366" r="0.5" fill="#8fa0b8" fill-opacity="0.21"/><circle cx="609" cy="407" r="0.5" fill="#c0a8b0" fill-opacity="0.29"/><circle cx="724" cy="309" r="0.5" fill="#c0a8b0" fill-opacity="0.33"/><circle cx="790" cy="313" r="0.6" fill="#8fa0b8" fill-opacity="0.24"/><circle cx="610" cy="473" r="0.6" fill="#8fa0b8" fill-opacity="0.30"/><circle cx="639" cy="524" r="0.5" fill="#a8b8c8" fill-opacity="0.17"/><circle cx="738" cy="261" r="0.6" fill="#8fa0b8" fill-opacity="0.44"/><circle cx="740" cy="313" r="0.5" fill="#a8b8c8" fill-opacity="0.18"/><circle cx="576" cy="532" r="0.5" fill="#a8b8c8" fill-opacity="0.27"/><circle cx="626" cy="540" r="0.4" fill="#8fa0b8" fill-opacity="0.42"/><circle cx="742" cy="311" r="0.6" fill="#c0a8b0" fill-opacity="0.37"/><circle cx="642" cy="522" r="0.4" fill="#a8b8c8" fill-opacity="0.25"/><circle cx="728" cy="532" r="0.5" fill="#8fa0b8" fill-opacity="0.36"/><circle cx="633" cy="569" r="0.4" fill="#c0a8b0" fill-opacity="0.32"/><circle cx="620" cy="342" r="0.4" fill="#c0a8b0" fill-opacity="0.40"/><circle cx="777" cy="346" r="0.5" fill="#8fa0b8" fill-opacity="0.24"/><circle cx="709" cy="326" r="0.4" fill="#c0a8b0" fill-opacity="0.43"/><circle cx="712" cy="314" r="0.4" fill="#a8b8c8" fill-opacity="0.37"/><circle cx="602" cy="571" r="0.6" fill="#8fa0b8" fill-opacity="0.44"/><circle cx="787" cy="387" r="0.6" fill="#a8b8c8" fill-opacity="0.31"/><circle cx="639" cy="481" r="0.6" fill="#c0a8b0" fill-opacity="0.28"/><circle cx="602" cy="631" r="0.4" fill="#a8b8c8" fill-opacity="0.29"/><circle cx="662" cy="450" r="0.5" fill="#c0a8b0" fill-opacity="0.30"/><circle cx="693" cy="455" r="0.4" fill="#a8b8c8" fill-opacity="0.26"/><circle cx="691" cy="326" r="0.4" fill="#c0a8b0" fill-opacity="0.36"/><circle cx="637" cy="443" r="0.6" fill="#8fa0b8" fill-opacity="0.39"/><circle cx="656" cy="397" r="0.5" fill="#a8b8c8" fill-opacity="0.38"/><circle cx="599" cy="486" r="0.5" fill="#c0a8b0" fill-opacity="0.29"/><circle cx="609" cy="590" r="0.5" fill="#c0a8b0" fill-opacity="0.27"/><circle cx="694" cy="238" r="0.5" fill="#a8b8c8" fill-opacity="0.24"/><circle cx="607" cy="649" r="0.6" fill="#a8b8c8" fill-opacity="0.26"/><circle cx="698" cy="563" r="0.6" fill="#c0a8b0" fill-opacity="0.31"/><circle cx="741" cy="282" r="0.4" fill="#a8b8c8" fill-opacity="0.18"/><circle cx="757" cy="422" r="0.5" fill="#8fa0b8" fill-opacity="0.43"/><circle cx="585" cy="620" r="0.5" fill="#c0a8b0" fill-opacity="0.16"/><circle cx="614" cy="456" r="0.5" fill="#a8b8c8" fill-opacity="0.30"/><circle cx="799" cy="329" r="0.6" fill="#a8b8c8" fill-opacity="0.32"/><circle cx="703" cy="444" r="0.6" fill="#8fa0b8" fill-opacity="0.30"/><circle cx="720" cy="247" r="0.4" fill="#c0a8b0" fill-opacity="0.26"/><circle cx="663" cy="483" r="0.4" fill="#c0a8b0" fill-opacity="0.25"/><circle cx="725" cy="276" r="0.4" fill="#c0a8b0" fill-opacity="0.20"/><circle cx="722" cy="308" r="0.5" fill="#8fa0b8" fill-opacity="0.32"/><circle cx="572" cy="625" r="0.5" fill="#8fa0b8" fill-opacity="0.19"/><circle cx="569" cy="482" r="0.4" fill="#8fa0b8" fill-opacity="0.31"/><circle cx="596" cy="563" r="0.6" fill="#8fa0b8" fill-opacity="0.32"/><circle cx="656" cy="242" r="0.4" fill="#a8b8c8" fill-opacity="0.37"/><circle cx="571" cy="627" r="0.4" fill="#c0a8b0" fill-opacity="0.29"/><circle cx="626" cy="464" r="0.6" fill="#8fa0b8" fill-opacity="0.38"/><circle cx="718" cy="280" r="0.5" fill="#a8b8c8" fill-opacity="0.31"/><circle cx="615" cy="621" r="0.4" fill="#8fa0b8" fill-opacity="0.17"/><circle cx="597" cy="486" r="0.4" fill="#c0a8b0" fill-opacity="0.27"/><circle cx="571" cy="475" r="0.5" fill="#8fa0b8" fill-opacity="0.29"/><circle cx="699" cy="248" r="0.6" fill="#c0a8b0" fill-opacity="0.21"/><circle cx="663" cy="466" r="0.5" fill="#a8b8c8" fill-opacity="0.15"/><circle cx="576" cy="567" r="0.6" fill="#a8b8c8" fill-opacity="0.44"/><circle cx="636" cy="532" r="0.5" fill="#a8b8c8" fill-opacity="0.43"/><circle cx="603" cy="487" r="0.4" fill="#8fa0b8" fill-opacity="0.42"/><circle cx="623" cy="595" r="0.5" fill="#8fa0b8" fill-opacity="0.18"/><circle cx="617" cy="496" r="0.5" fill="#a8b8c8" fill-opacity="0.44"/><circle cx="598" cy="398" r="0.5" fill="#c0a8b0" fill-opacity="0.39"/><circle cx="614" cy="513" r="0.6" fill="#a8b8c8" fill-opacity="0.36"/><circle cx="716" cy="250" r="0.5" fill="#a8b8c8" fill-opacity="0.32"/><circle cx="697" cy="489" r="0.4" fill="#a8b8c8" fill-opacity="0.40"/><circle cx="707" cy="263" r="0.4" fill="#8fa0b8" fill-opacity="0.26"/><circle cx="660" cy="585" r="0.6" fill="#a8b8c8" fill-opacity="0.26"/><circle cx="745" cy="333" r="0.5" fill="#a8b8c8" fill-opacity="0.15"/><circle cx="762" cy="343" r="0.4" fill="#8fa0b8" fill-opacity="0.21"/><circle cx="579" cy="389" r="0.4" fill="#8fa0b8" fill-opacity="0.37"/><circle cx="734" cy="258" r="0.4" fill="#8fa0b8" fill-opacity="0.39"/><circle cx="574" cy="615" r="0.4" fill="#c0a8b0" fill-opacity="0.43"/><circle cx="674" cy="375" r="0.5" fill="#a8b8c8" fill-opacity="0.21"/><circle cx="732" cy="296" r="0.5" fill="#a8b8c8" fill-opacity="0.42"/><circle cx="581" cy="571" r="0.5" fill="#c0a8b0" fill-opacity="0.41"/><circle cx="729" cy="251" r="0.5" fill="#8fa0b8" fill-opacity="0.24"/><circle cx="586" cy="558" r="0.5" fill="#a8b8c8" fill-opacity="0.17"/><circle cx="689" cy="412" r="0.6" fill="#a8b8c8" fill-opacity="0.25"/><circle cx="665" cy="448" r="0.5" fill="#8fa0b8" fill-opacity="0.31"/><circle cx="541" cy="593" r="0.6" fill="#a8b8c8" fill-opacity="0.24"/><circle cx="720" cy="454" r="0.5" fill="#c0a8b0" fill-opacity="0.18"/><circle cx="765" cy="278" r="0.5" fill="#a8b8c8" fill-opacity="0.38"/><circle cx="782" cy="318" r="0.4" fill="#a8b8c8" fill-opacity="0.37"/><circle cx="696" cy="395" r="0.5" fill="#a8b8c8" fill-opacity="0.31"/><circle cx="812" cy="288" r="0.6" fill="#a8b8c8" fill-opacity="0.35"/><circle cx="733" cy="406" r="0.5" fill="#c0a8b0" fill-opacity="0.30"/><circle cx="572" cy="594" r="0.5" fill="#c0a8b0" fill-opacity="0.44"/><circle cx="533" cy="546" r="0.6" fill="#a8b8c8" fill-opacity="0.40"/><circle cx="616" cy="587" r="0.6" fill="#a8b8c8" fill-opacity="0.42"/><circle cx="596" cy="461" r="0.4" fill="#c0a8b0" fill-opacity="0.26"/><circle cx="706" cy="304" r="0.5" fill="#c0a8b0" fill-opacity="0.18"/><circle cx="690" cy="365" r="0.5" fill="#a8b8c8" fill-opacity="0.15"/><circle cx="537" cy="576" r="0.5" fill="#8fa0b8" fill-opacity="0.44"/><circle cx="661" cy="548" r="0.6" fill="#c0a8b0" fill-opacity="0.43"/><circle cx="563" cy="609" r="0.5" fill="#a8b8c8" fill-opacity="0.22"/><circle cx="737" cy="290" r="0.5" fill="#a8b8c8" fill-opacity="0.43"/><circle cx="634" cy="583" r="0.6" fill="#8fa0b8" fill-opacity="0.18"/><circle cx="719" cy="418" r="0.6" fill="#8fa0b8" fill-opacity="0.29"/><circle cx="730" cy="300" r="0.6" fill="#c0a8b0" fill-opacity="0.42"/><circle cx="722" cy="343" r="0.4" fill="#c0a8b0" fill-opacity="0.21"/><circle cx="647" cy="429" r="0.5" fill="#a8b8c8" fill-opacity="0.24"/><circle cx="678" cy="272" r="0.4" fill="#a8b8c8" fill-opacity="0.45"/><circle cx="645" cy="515" r="0.4" fill="#8fa0b8" fill-opacity="0.42"/><circle cx="662" cy="470" r="0.5" fill="#c0a8b0" fill-opacity="0.44"/><circle cx="670" cy="490" r="0.6" fill="#c0a8b0" fill-opacity="0.38"/><circle cx="666" cy="499" r="0.6" fill="#c0a8b0" fill-opacity="0.25"/><circle cx="728" cy="301" r="0.4" fill="#a8b8c8" fill-opacity="0.22"/><circle cx="668" cy="671" r="0.6" fill="#c0a8b0" fill-opacity="0.40"/><circle cx="581" cy="563" r="0.6" fill="#c0a8b0" fill-opacity="0.43"/><circle cx="586" cy="573" r="0.4" fill="#c0a8b0" fill-opacity="0.27"/><circle cx="529" cy="492" r="0.6" fill="#c0a8b0" fill-opacity="0.28"/><circle cx="727" cy="331" r="0.5" fill="#8fa0b8" fill-opacity="0.36"/><circle cx="816" cy="308" r="0.5" fill="#8fa0b8" fill-opacity="0.37"/><circle cx="661" cy="427" r="0.4" fill="#8fa0b8" fill-opacity="0.19"/><circle cx="606" cy="506" r="0.4" fill="#a8b8c8" fill-opacity="0.45"/><circle cx="587" cy="573" r="0.4" fill="#8fa0b8" fill-opacity="0.22"/><circle cx="578" cy="561" r="0.4" fill="#c0a8b0" fill-opacity="0.35"/><circle cx="627" cy="482" r="0.6" fill="#a8b8c8" fill-opacity="0.24"/><circle cx="681" cy="384" r="0.6" fill="#c0a8b0" fill-opacity="0.45"/><circle cx="663" cy="471" r="0.4" fill="#c0a8b0" fill-opacity="0.35"/><circle cx="744" cy="481" r="0.5" fill="#a8b8c8" fill-opacity="0.29"/><circle cx="680" cy="505" r="0.6" fill="#c0a8b0" fill-opacity="0.34"/><circle cx="740" cy="420" r="0.5" fill="#8fa0b8" fill-opacity="0.34"/><circle cx="663" cy="493" r="0.4" fill="#a8b8c8" fill-opacity="0.38"/><circle cx="700" cy="447" r="0.4" fill="#8fa0b8" fill-opacity="0.32"/><circle cx="724" cy="261" r="0.6" fill="#8fa0b8" fill-opacity="0.27"/><circle cx="784" cy="294" r="0.6" fill="#a8b8c8" fill-opacity="0.27"/><circle cx="705" cy="267" r="0.6" fill="#a8b8c8" fill-opacity="0.28"/><circle cx="718" cy="396" r="0.6" fill="#8fa0b8" fill-opacity="0.24"/><circle cx="753" cy="254" r="0.5" fill="#c0a8b0" fill-opacity="0.27"/><circle cx="653" cy="339" r="0.5" fill="#8fa0b8" fill-opacity="0.36"/><circle cx="750" cy="277" r="0.5" fill="#c0a8b0" fill-opacity="0.42"/><circle cx="584" cy="650" r="0.5" fill="#a8b8c8" fill-opacity="0.17"/><circle cx="736" cy="360" r="0.4" fill="#c0a8b0" fill-opacity="0.40"/><circle cx="633" cy="567" r="0.6" fill="#8fa0b8" fill-opacity="0.28"/><circle cx="776" cy="325" r="0.5" fill="#8fa0b8" fill-opacity="0.30"/><circle cx="679" cy="238" r="0.6" fill="#8fa0b8" fill-opacity="0.35"/><circle cx="768" cy="301" r="0.4" fill="#c0a8b0" fill-opacity="0.24"/><circle cx="737" cy="449" r="0.6" fill="#c0a8b0" fill-opacity="0.45"/><circle cx="486" cy="563" r="0.5" fill="#8fa0b8" fill-opacity="0.42"/><circle cx="728" cy="278" r="0.4" fill="#c0a8b0" fill-opacity="0.30"/><circle cx="727" cy="295" r="0.6" fill="#c0a8b0" fill-opacity="0.37"/><circle cx="764" cy="252" r="0.6" fill="#8fa0b8" fill-opacity="0.30"/><circle cx="647" cy="436" r="0.5" fill="#a8b8c8" fill-opacity="0.36"/><circle cx="675" cy="526" r="0.4" fill="#a8b8c8" fill-opacity="0.25"/><circle cx="621" cy="524" r="0.5" fill="#c0a8b0" fill-opacity="0.37"/><circle cx="659" cy="260" r="0.5" fill="#8fa0b8" fill-opacity="0.36"/><circle cx="683" cy="383" r="0.5" fill="#a8b8c8" fill-opacity="0.26"/><circle cx="590" cy="616" r="0.6" fill="#8fa0b8" fill-opacity="0.30"/><circle cx="738" cy="319" r="0.4" fill="#8fa0b8" fill-opacity="0.36"/><circle cx="668" cy="509" r="0.4" fill="#a8b8c8" fill-opacity="0.18"/><circle cx="721" cy="303" r="0.4" fill="#c0a8b0" fill-opacity="0.20"/><circle cx="610" cy="380" r="0.5" fill="#a8b8c8" fill-opacity="0.24"/><circle cx="726" cy="495" r="0.4" fill="#8fa0b8" fill-opacity="0.29"/><circle cx="647" cy="492" r="0.6" fill="#8fa0b8" fill-opacity="0.19"/><circle cx="613" cy="513" r="0.6" fill="#8fa0b8" fill-opacity="0.21"/><circle cx="816" cy="356" r="0.4" fill="#a8b8c8" fill-opacity="0.31"/><circle cx="578" cy="560" r="0.4" fill="#8fa0b8" fill-opacity="0.17"/><circle cx="713" cy="562" r="0.4" fill="#a8b8c8" fill-opacity="0.41"/><circle cx="721" cy="330" r="0.5" fill="#c0a8b0" fill-opacity="0.22"/><circle cx="694" cy="327" r="0.4" fill="#c0a8b0" fill-opacity="0.28"/><circle cx="734" cy="366" r="0.4" fill="#8fa0b8" fill-opacity="0.22"/><circle cx="590" cy="569" r="0.5" fill="#c0a8b0" fill-opacity="0.31"/><circle cx="720" cy="451" r="0.4" fill="#a8b8c8" fill-opacity="0.36"/><circle cx="620" cy="660" r="0.4" fill="#a8b8c8" fill-opacity="0.32"/><circle cx="713" cy="477" r="0.5" fill="#a8b8c8" fill-opacity="0.27"/><circle cx="708" cy="484" r="0.5" fill="#8fa0b8" fill-opacity="0.41"/><circle cx="582" cy="642" r="0.4" fill="#c0a8b0" fill-opacity="0.20"/><circle cx="548" cy="363" r="0.4" fill="#a8b8c8" fill-opacity="0.19"/><circle cx="641" cy="360" r="0.6" fill="#8fa0b8" fill-opacity="0.40"/><circle cx="724" cy="288" r="0.4" fill="#8fa0b8" fill-opacity="0.16"/><circle cx="614" cy="492" r="0.6" fill="#8fa0b8" fill-opacity="0.19"/></g>
 <circle cx="925" cy="526" r="3" fill="#8090c0" fill-opacity="0.35"/><circle cx="925" cy="526" r="1.3" fill="#c8d0f0" fill-opacity="0.8"/><circle cx="702" cy="624" r="0.5" fill="#8090a0" fill-opacity="0.48"/><circle cx="732" cy="638" r="0.5" fill="#a06070" fill-opacity="0.45"/><circle cx="742" cy="585" r="0.5" fill="#a06070" fill-opacity="0.47"/><circle cx="569" cy="602" r="0.5" fill="#a06070" fill-opacity="0.31"/><circle cx="567" cy="585" r="0.5" fill="#8090a0" fill-opacity="0.27"/><circle cx="613" cy="637" r="0.5" fill="#6080b0" fill-opacity="0.25"/><circle cx="747" cy="576" r="0.5" fill="#8090a0" fill-opacity="0.33"/><circle cx="574" cy="642" r="0.5" fill="#a06070" fill-opacity="0.26"/><circle cx="596" cy="643" r="0.5" fill="#a06070" fill-opacity="0.29"/><circle cx="790" cy="608" r="0.5" fill="#8090a0" fill-opacity="0.39"/><circle cx="587" cy="642" r="0.5" fill="#a06070" fill-opacity="0.49"/><circle cx="772" cy="589" r="0.5" fill="#6080b0" fill-opacity="0.32"/><circle cx="783" cy="586" r="0.5" fill="#6080b0" fill-opacity="0.29"/><circle cx="697" cy="565" r="0.5" fill="#8090a0" fill-opacity="0.41"/><circle cx="557" cy="593" r="0.5" fill="#6080b0" fill-opacity="0.34"/><circle cx="622" cy="603" r="0.5" fill="#8090a0" fill-opacity="0.25"/><circle cx="607" cy="639" r="0.5" fill="#8090a0" fill-opacity="0.31"/><circle cx="645" cy="608" r="0.5" fill="#6080b0" fill-opacity="0.31"/><circle cx="690" cy="566" r="0.5" fill="#a06070" fill-opacity="0.41"/><circle cx="702" cy="640" r="0.5" fill="#a06070" fill-opacity="0.43"/><circle cx="782" cy="639" r="0.5" fill="#6080b0" fill-opacity="0.35"/><circle cx="772" cy="585" r="0.5" fill="#6080b0" fill-opacity="0.23"/><circle cx="735" cy="628" r="0.5" fill="#6080b0" fill-opacity="0.21"/><circle cx="786" cy="572" r="0.5" fill="#6080b0" fill-opacity="0.35"/><circle cx="634" cy="577" r="0.5" fill="#6080b0" fill-opacity="0.48"/><circle cx="682" cy="590" r="0.5" fill="#6080b0" fill-opacity="0.29"/><circle cx="748" cy="615" r="0.5" fill="#8090a0" fill-opacity="0.41"/><circle cx="799" cy="578" r="0.5" fill="#a06070" fill-opacity="0.22"/><circle cx="696" cy="638" r="0.5" fill="#a06070" fill-opacity="0.27"/><circle cx="694" cy="630" r="0.5" fill="#6080b0" fill-opacity="0.40"/><circle cx="578" cy="642" r="0.5" fill="#8090a0" fill-opacity="0.21"/><circle cx="668" cy="631" r="0.5" fill="#a06070" fill-opacity="0.49"/><circle cx="687" cy="575" r="0.5" fill="#6080b0" fill-opacity="0.23"/><circle cx="653" cy="577" r="0.5" fill="#6080b0" fill-opacity="0.29"/><circle cx="658" cy="644" r="0.5" fill="#a06070" fill-opacity="0.49"/><circle cx="658" cy="604" r="0.5" fill="#8090a0" fill-opacity="0.30"/><circle cx="611" cy="602" r="0.5" fill="#a06070" fill-opacity="0.23"/><circle cx="754" cy="607" r="0.5" fill="#a06070" fill-opacity="0.39"/><circle cx="670" cy="592" r="0.5" fill="#a06070" fill-opacity="0.35"/><circle cx="674" cy="608" r="0.5" fill="#8090a0" fill-opacity="0.31"/><circle cx="744" cy="626" r="0.5" fill="#8090a0" fill-opacity="0.38"/><circle cx="549" cy="589" r="0.5" fill="#8090a0" fill-opacity="0.41"/><circle cx="613" cy="603" r="0.5" fill="#8090a0" fill-opacity="0.41"/><circle cx="789" cy="592" r="0.5" fill="#a06070" fill-opacity="0.37"/><circle cx="543" cy="608" r="0.5" fill="#6080b0" fill-opacity="0.30"/><circle cx="611" cy="588" r="0.5" fill="#8090a0" fill-opacity="0.39"/><circle cx="747" cy="592" r="0.5" fill="#8090a0" fill-opacity="0.30"/><circle cx="784" cy="597" r="0.5" fill="#a06070" fill-opacity="0.46"/><circle cx="719" cy="642" r="0.5" fill="#6080b0" fill-opacity="0.36"/><circle cx="678" cy="578" r="0.5" fill="#6080b0" fill-opacity="0.48"/><circle cx="664" cy="620" r="0.5" fill="#8090a0" fill-opacity="0.40"/><circle cx="648" cy="614" r="0.5" fill="#8090a0" fill-opacity="0.35"/><circle cx="783" cy="589" r="0.5" fill="#8090a0" fill-opacity="0.43"/><circle cx="706" cy="622" r="0.5" fill="#a06070" fill-opacity="0.26"/><circle cx="692" cy="614" r="0.5" fill="#a06070" fill-opacity="0.27"/><circle cx="718" cy="615" r="0.5" fill="#a06070" fill-opacity="0.50"/><circle cx="795" cy="578" r="0.5" fill="#a06070" fill-opacity="0.23"/><circle cx="792" cy="603" r="0.5" fill="#8090a0" fill-opacity="0.21"/><circle cx="661" cy="595" r="0.5" fill="#8090a0" fill-opacity="0.22"/><circle cx="593" cy="622" r="0.5" fill="#6080b0" fill-opacity="0.20"/><circle cx="645" cy="587" r="0.5" fill="#6080b0" fill-opacity="0.46"/><circle cx="719" cy="608" r="0.5" fill="#a06070" fill-opacity="0.36"/><circle cx="618" cy="588" r="0.5" fill="#8090a0" fill-opacity="0.30"/><circle cx="691" cy="641" r="0.5" fill="#a06070" fill-opacity="0.33"/><circle cx="751" cy="616" r="0.5" fill="#6080b0" fill-opacity="0.34"/><circle cx="581" cy="595" r="0.5" fill="#6080b0" fill-opacity="0.49"/><circle cx="792" cy="613" r="0.5" fill="#6080b0" fill-opacity="0.45"/><circle cx="712" cy="595" r="0.5" fill="#6080b0" fill-opacity="0.37"/><circle cx="700" cy="576" r="0.5" fill="#8090a0" fill-opacity="0.46"/><circle cx="687" cy="599" r="0.5" fill="#a06070" fill-opacity="0.35"/><circle cx="665" cy="621" r="0.5" fill="#6080b0" fill-opacity="0.49"/><circle cx="778" cy="612" r="0.5" fill="#6080b0" fill-opacity="0.42"/><circle cx="618" cy="585" r="0.5" fill="#a06070" fill-opacity="0.30"/><circle cx="796" cy="604" r="0.5" fill="#6080b0" fill-opacity="0.24"/><circle cx="546" cy="617" r="0.5" fill="#6080b0" fill-opacity="0.27"/><circle cx="550" cy="576" r="0.5" fill="#6080b0" fill-opacity="0.20"/><circle cx="678" cy="587" r="0.5" fill="#6080b0" fill-opacity="0.43"/><circle cx="604" cy="586" r="0.5" fill="#a06070" fill-opacity="0.42"/><circle cx="614" cy="604" r="0.5" fill="#6080b0" fill-opacity="0.36"/><circle cx="765" cy="635" r="0.5" fill="#a06070" fill-opacity="0.20"/><circle cx="573" cy="587" r="0.5" fill="#8090a0" fill-opacity="0.30"/><circle cx="617" cy="607" r="0.5" fill="#6080b0" fill-opacity="0.30"/><circle cx="717" cy="629" r="0.5" fill="#a06070" fill-opacity="0.21"/><circle cx="606" cy="601" r="0.5" fill="#a06070" fill-opacity="0.47"/><circle cx="682" cy="566" r="0.5" fill="#6080b0" fill-opacity="0.38"/><circle cx="719" cy="640" r="0.5" fill="#8090a0" fill-opacity="0.34"/><circle cx="777" cy="595" r="0.5" fill="#6080b0" fill-opacity="0.40"/><circle cx="727" cy="636" r="0.5" fill="#6080b0" fill-opacity="0.45"/><circle cx="557" cy="631" r="0.5" fill="#8090a0" fill-opacity="0.43"/><circle cx="691" cy="616" r="0.5" fill="#6080b0" fill-opacity="0.47"/><circle cx="577" cy="603" r="0.5" fill="#8090a0" fill-opacity="0.47"/><circle cx="793" cy="607" r="0.5" fill="#6080b0" fill-opacity="0.38"/><circle cx="751" cy="570" r="0.5" fill="#a06070" fill-opacity="0.28"/><circle cx="562" cy="570" r="0.5" fill="#a06070" fill-opacity="0.30"/><circle cx="652" cy="570" r="0.5" fill="#6080b0" fill-opacity="0.41"/><circle cx="553" cy="632" r="0.5" fill="#a06070" fill-opacity="0.38"/><circle cx="754" cy="574" r="0.5" fill="#a06070" fill-opacity="0.50"/><circle cx="724" cy="600" r="0.5" fill="#a06070" fill-opacity="0.38"/><circle cx="648" cy="578" r="0.5" fill="#8090a0" fill-opacity="0.26"/><circle cx="684" cy="617" r="0.5" fill="#8090a0" fill-opacity="0.22"/><circle cx="555" cy="610" r="0.5" fill="#8090a0" fill-opacity="0.32"/><circle cx="702" cy="566" r="0.5" fill="#a06070" fill-opacity="0.29"/><circle cx="696" cy="604" r="0.5" fill="#8090a0" fill-opacity="0.31"/><circle cx="554" cy="620" r="0.5" fill="#a06070" fill-opacity="0.37"/><circle cx="716" cy="588" r="0.5" fill="#8090a0" fill-opacity="0.36"/><circle cx="597" cy="570" r="0.5" fill="#a06070" fill-opacity="0.28"/><circle cx="735" cy="606" r="0.5" fill="#a06070" fill-opacity="0.44"/><circle cx="765" cy="601" r="0.5" fill="#6080b0" fill-opacity="0.25"/><circle cx="725" cy="617" r="0.5" fill="#a06070" fill-opacity="0.37"/><circle cx="549" cy="633" r="0.5" fill="#8090a0" fill-opacity="0.38"/><circle cx="602" cy="634" r="0.5" fill="#6080b0" fill-opacity="0.49"/><circle cx="568" cy="607" r="0.5" fill="#8090a0" fill-opacity="0.42"/><circle cx="554" cy="577" r="0.5" fill="#6080b0" fill-opacity="0.40"/><circle cx="598" cy="574" r="0.5" fill="#8090a0" fill-opacity="0.35"/><circle cx="595" cy="620" r="0.5" fill="#6080b0" fill-opacity="0.31"/><circle cx="601" cy="591" r="0.5" fill="#8090a0" fill-opacity="0.41"/><circle cx="747" cy="595" r="0.5" fill="#8090a0" fill-opacity="0.45"/><circle cx="708" cy="629" r="0.5" fill="#6080b0" fill-opacity="0.49"/><circle cx="634" cy="568" r="0.5" fill="#8090a0" fill-opacity="0.26"/><circle cx="587" cy="570" r="0.5" fill="#a06070" fill-opacity="0.21"/>
 <circle cx="554" cy="629" r="1.0" fill="#3a78b0" fill-opacity="0.57"/><circle cx="560" cy="634" r="1.0" fill="#6ab0e0" fill-opacity="0.58"/><circle cx="562" cy="595" r="0.8" fill="#a0c8e8" fill-opacity="0.38"/><circle cx="626" cy="606" r="0.6" fill="#4a90c8" fill-opacity="0.55"/><circle cx="649" cy="633" r="0.8" fill="#a0c8e8" fill-opacity="0.37"/><circle cx="573" cy="619" r="0.6" fill="#3a78b0" fill-opacity="0.36"/><circle cx="620" cy="599" r="0.6" fill="#a0c8e8" fill-opacity="0.42"/><circle cx="619" cy="615" r="0.6" fill="#6ab0e0" fill-opacity="0.65"/><circle cx="589" cy="635" r="0.6" fill="#6ab0e0" fill-opacity="0.44"/><circle cx="646" cy="639" r="1.0" fill="#4a90c8" fill-opacity="0.41"/><circle cx="590" cy="636" r="0.6" fill="#3a78b0" fill-opacity="0.77"/><circle cx="637" cy="615" r="0.8" fill="#a0c8e8" fill-opacity="0.58"/><circle cx="572" cy="619" r="0.8" fill="#4a90c8" fill-opacity="0.73"/><circle cx="553" cy="630" r="0.8" fill="#4a90c8" fill-opacity="0.57"/><circle cx="598" cy="632" r="0.6" fill="#3a78b0" fill-opacity="0.60"/><circle cx="607" cy="604" r="0.6" fill="#3a78b0" fill-opacity="0.73"/><circle cx="573" cy="632" r="0.8" fill="#6ab0e0" fill-opacity="0.40"/><circle cx="543" cy="635" r="0.8" fill="#3a78b0" fill-opacity="0.42"/><circle cx="539" cy="620" r="1.0" fill="#6ab0e0" fill-opacity="0.53"/><circle cx="649" cy="642" r="1.0" fill="#4a90c8" fill-opacity="0.75"/><circle cx="591" cy="613" r="0.6" fill="#6ab0e0" fill-opacity="0.42"/><circle cx="543" cy="634" r="1.0" fill="#a0c8e8" fill-opacity="0.38"/><circle cx="568" cy="637" r="1.0" fill="#3a78b0" fill-opacity="0.37"/><circle cx="564" cy="614" r="0.8" fill="#6ab0e0" fill-opacity="0.79"/><circle cx="621" cy="618" r="0.8" fill="#6ab0e0" fill-opacity="0.78"/><circle cx="595" cy="631" r="0.6" fill="#6ab0e0" fill-opacity="0.75"/><circle cx="577" cy="603" r="0.8" fill="#a0c8e8" fill-opacity="0.57"/><circle cx="639" cy="618" r="0.6" fill="#3a78b0" fill-opacity="0.41"/><circle cx="618" cy="614" r="0.6" fill="#4a90c8" fill-opacity="0.47"/><circle cx="573" cy="607" r="1.0" fill="#a0c8e8" fill-opacity="0.47"/><circle cx="582" cy="642" r="0.6" fill="#6ab0e0" fill-opacity="0.41"/><circle cx="581" cy="604" r="1.0" fill="#a0c8e8" fill-opacity="0.70"/><circle cx="543" cy="601" r="0.8" fill="#6ab0e0" fill-opacity="0.49"/><circle cx="643" cy="614" r="0.6" fill="#6ab0e0" fill-opacity="0.43"/><circle cx="634" cy="605" r="1.0" fill="#4a90c8" fill-opacity="0.62"/><circle cx="593" cy="632" r="0.6" fill="#4a90c8" fill-opacity="0.52"/><circle cx="634" cy="614" r="1.0" fill="#6ab0e0" fill-opacity="0.73"/><circle cx="562" cy="642" r="1.0" fill="#3a78b0" fill-opacity="0.69"/><circle cx="563" cy="603" r="1.0" fill="#3a78b0" fill-opacity="0.72"/><circle cx="627" cy="619" r="1.0" fill="#4a90c8" fill-opacity="0.60"/><circle cx="542" cy="624" r="0.8" fill="#3a78b0" fill-opacity="0.48"/><circle cx="607" cy="632" r="0.6" fill="#4a90c8" fill-opacity="0.63"/><circle cx="572" cy="605" r="0.6" fill="#3a78b0" fill-opacity="0.65"/><circle cx="583" cy="638" r="1.0" fill="#4a90c8" fill-opacity="0.63"/><circle cx="628" cy="643" r="1.0" fill="#4a90c8" fill-opacity="0.66"/><circle cx="616" cy="618" r="1.0" fill="#a0c8e8" fill-opacity="0.74"/><circle cx="543" cy="596" r="1.0" fill="#a0c8e8" fill-opacity="0.37"/><circle cx="567" cy="624" r="0.8" fill="#a0c8e8" fill-opacity="0.56"/><circle cx="562" cy="614" r="0.8" fill="#6ab0e0" fill-opacity="0.63"/><circle cx="646" cy="599" r="0.8" fill="#6ab0e0" fill-opacity="0.57"/><circle cx="617" cy="639" r="0.8" fill="#3a78b0" fill-opacity="0.46"/><circle cx="640" cy="614" r="1.0" fill="#a0c8e8" fill-opacity="0.72"/><circle cx="646" cy="643" r="0.6" fill="#6ab0e0" fill-opacity="0.49"/><circle cx="571" cy="614" r="0.6" fill="#4a90c8" fill-opacity="0.60"/><circle cx="544" cy="610" r="0.8" fill="#a0c8e8" fill-opacity="0.79"/><circle cx="649" cy="603" r="0.8" fill="#6ab0e0" fill-opacity="0.66"/><circle cx="578" cy="624" r="0.6" fill="#3a78b0" fill-opacity="0.39"/><circle cx="538" cy="620" r="0.6" fill="#6ab0e0" fill-opacity="0.46"/><circle cx="614" cy="630" r="0.6" fill="#a0c8e8" fill-opacity="0.56"/><circle cx="585" cy="625" r="0.8" fill="#6ab0e0" fill-opacity="0.65"/><circle cx="606" cy="600" r="0.6" fill="#4a90c8" fill-opacity="0.51"/><circle cx="607" cy="638" r="0.8" fill="#4a90c8" fill-opacity="0.38"/><circle cx="602" cy="615" r="0.8" fill="#a0c8e8" fill-opacity="0.46"/><circle cx="536" cy="622" r="0.6" fill="#3a78b0" fill-opacity="0.44"/><circle cx="578" cy="595" r="0.6" fill="#6ab0e0" fill-opacity="0.61"/><circle cx="640" cy="616" r="0.6" fill="#3a78b0" fill-opacity="0.43"/><circle cx="581" cy="622" r="0.6" fill="#a0c8e8" fill-opacity="0.75"/><circle cx="537" cy="624" r="0.6" fill="#a0c8e8" fill-opacity="0.75"/><circle cx="621" cy="632" r="0.6" fill="#6ab0e0" fill-opacity="0.38"/><circle cx="629" cy="625" r="1.0" fill="#a0c8e8" fill-opacity="0.56"/><circle cx="627" cy="612" r="0.8" fill="#6ab0e0" fill-opacity="0.51"/><circle cx="569" cy="626" r="0.6" fill="#4a90c8" fill-opacity="0.43"/><circle cx="546" cy="636" r="0.8" fill="#3a78b0" fill-opacity="0.51"/><circle cx="554" cy="624" r="0.8" fill="#a0c8e8" fill-opacity="0.42"/><circle cx="547" cy="641" r="1.0" fill="#3a78b0" fill-opacity="0.53"/><circle cx="614" cy="631" r="1.0" fill="#a0c8e8" fill-opacity="0.39"/><circle cx="630" cy="605" r="0.6" fill="#3a78b0" fill-opacity="0.62"/><circle cx="608" cy="626" r="0.6" fill="#3a78b0" fill-opacity="0.57"/><circle cx="554" cy="637" r="0.6" fill="#3a78b0" fill-opacity="0.66"/><circle cx="560" cy="633" r="1.0" fill="#4a90c8" fill-opacity="0.79"/><circle cx="580" cy="641" r="1.0" fill="#3a78b0" fill-opacity="0.36"/><circle cx="575" cy="625" r="1.0" fill="#4a90c8" fill-opacity="0.69"/><circle cx="609" cy="603" r="1.0" fill="#a0c8e8" fill-opacity="0.44"/><circle cx="650" cy="622" r="0.8" fill="#3a78b0" fill-opacity="0.76"/><circle cx="563" cy="624" r="0.8" fill="#3a78b0" fill-opacity="0.61"/><circle cx="649" cy="640" r="1.0" fill="#4a90c8" fill-opacity="0.79"/><circle cx="620" cy="631" r="0.6" fill="#3a78b0" fill-opacity="0.75"/><circle cx="594" cy="601" r="0.6" fill="#a0c8e8" fill-opacity="0.63"/><circle cx="588" cy="619" r="0.6" fill="#6ab0e0" fill-opacity="0.46"/><circle cx="584" cy="614" r="0.8" fill="#a0c8e8" fill-opacity="0.47"/><circle cx="770" cy="609" r="0.6" fill="#b06080" fill-opacity="0.53"/><circle cx="744" cy="608" r="0.6" fill="#8070a0" fill-opacity="0.51"/><circle cx="795" cy="644" r="0.6" fill="#8070a0" fill-opacity="0.30"/><circle cx="704" cy="630" r="0.6" fill="#c08090" fill-opacity="0.35"/><circle cx="808" cy="609" r="0.6" fill="#8070a0" fill-opacity="0.33"/><circle cx="795" cy="632" r="0.6" fill="#8070a0" fill-opacity="0.49"/><circle cx="704" cy="639" r="0.6" fill="#b06080" fill-opacity="0.42"/><circle cx="760" cy="605" r="0.6" fill="#c08090" fill-opacity="0.41"/><circle cx="793" cy="585" r="0.6" fill="#8070a0" fill-opacity="0.51"/><circle cx="749" cy="596" r="0.6" fill="#8070a0" fill-opacity="0.53"/><circle cx="821" cy="593" r="0.6" fill="#8070a0" fill-opacity="0.56"/><circle cx="710" cy="600" r="0.6" fill="#c08090" fill-opacity="0.30"/><circle cx="798" cy="640" r="0.6" fill="#b06080" fill-opacity="0.49"/><circle cx="738" cy="594" r="0.6" fill="#b06080" fill-opacity="0.30"/><circle cx="800" cy="612" r="0.6" fill="#b06080" fill-opacity="0.49"/><circle cx="744" cy="622" r="0.6" fill="#8070a0" fill-opacity="0.25"/><circle cx="810" cy="598" r="0.6" fill="#8070a0" fill-opacity="0.49"/><circle cx="754" cy="588" r="0.6" fill="#c08090" fill-opacity="0.48"/><circle cx="703" cy="626" r="0.6" fill="#c08090" fill-opacity="0.50"/><circle cx="763" cy="614" r="0.6" fill="#c08090" fill-opacity="0.38"/><circle cx="783" cy="621" r="0.6" fill="#8070a0" fill-opacity="0.30"/><circle cx="752" cy="608" r="0.6" fill="#c08090" fill-opacity="0.41"/><circle cx="767" cy="594" r="0.6" fill="#b06080" fill-opacity="0.26"/><circle cx="784" cy="609" r="0.6" fill="#b06080" fill-opacity="0.52"/><circle cx="817" cy="628" r="0.6" fill="#8070a0" fill-opacity="0.42"/><circle cx="721" cy="631" r="0.6" fill="#8070a0" fill-opacity="0.49"/><circle cx="739" cy="642" r="0.6" fill="#8070a0" fill-opacity="0.32"/><circle cx="720" cy="620" r="0.6" fill="#b06080" fill-opacity="0.33"/><circle cx="715" cy="614" r="0.6" fill="#b06080" fill-opacity="0.47"/><circle cx="716" cy="588" r="0.6" fill="#c08090" fill-opacity="0.49"/><circle cx="770" cy="585" r="0.6" fill="#b06080" fill-opacity="0.33"/><circle cx="774" cy="596" r="0.6" fill="#8070a0" fill-opacity="0.45"/><circle cx="806" cy="613" r="0.6" fill="#c08090" fill-opacity="0.53"/><circle cx="752" cy="641" r="0.6" fill="#c08090" fill-opacity="0.38"/><circle cx="802" cy="582" r="0.6" fill="#8070a0" fill-opacity="0.27"/><circle cx="753" cy="632" r="0.6" fill="#8070a0" fill-opacity="0.31"/><circle cx="820" cy="585" r="0.6" fill="#8070a0" fill-opacity="0.52"/><circle cx="794" cy="614" r="0.6" fill="#b06080" fill-opacity="0.35"/><circle cx="748" cy="611" r="0.6" fill="#8070a0" fill-opacity="0.39"/><circle cx="804" cy="583" r="0.6" fill="#8070a0" fill-opacity="0.45"/><circle cx="763" cy="633" r="0.6" fill="#b06080" fill-opacity="0.51"/><circle cx="719" cy="600" r="0.6" fill="#b06080" fill-opacity="0.34"/><circle cx="788" cy="638" r="0.6" fill="#b06080" fill-opacity="0.38"/><circle cx="812" cy="607" r="0.6" fill="#c08090" fill-opacity="0.29"/><circle cx="826" cy="594" r="0.6" fill="#8070a0" fill-opacity="0.50"/><circle cx="706" cy="620" r="0.6" fill="#c08090" fill-opacity="0.37"/><circle cx="724" cy="638" r="0.6" fill="#8070a0" fill-opacity="0.43"/><circle cx="721" cy="594" r="0.6" fill="#b06080" fill-opacity="0.55"/><circle cx="744" cy="623" r="0.6" fill="#b06080" fill-opacity="0.55"/><circle cx="825" cy="596" r="0.6" fill="#8070a0" fill-opacity="0.43"/><circle cx="749" cy="598" r="0.6" fill="#c08090" fill-opacity="0.56"/><circle cx="724" cy="604" r="0.6" fill="#b06080" fill-opacity="0.36"/><circle cx="816" cy="634" r="0.6" fill="#b06080" fill-opacity="0.35"/><circle cx="798" cy="625" r="0.6" fill="#c08090" fill-opacity="0.59"/><circle cx="814" cy="596" r="0.6" fill="#8070a0" fill-opacity="0.36"/><circle cx="749" cy="642" r="0.6" fill="#b06080" fill-opacity="0.50"/><circle cx="704" cy="617" r="0.6" fill="#8070a0" fill-opacity="0.32"/><circle cx="828" cy="629" r="0.6" fill="#b06080" fill-opacity="0.53"/><circle cx="813" cy="637" r="0.6" fill="#8070a0" fill-opacity="0.59"/><circle cx="765" cy="625" r="0.6" fill="#c08090" fill-opacity="0.32"/><circle cx="722" cy="638" r="0.6" fill="#8070a0" fill-opacity="0.48"/><circle cx="738" cy="588" r="0.6" fill="#8070a0" fill-opacity="0.27"/><circle cx="793" cy="628" r="0.6" fill="#b06080" fill-opacity="0.41"/><circle cx="799" cy="583" r="0.6" fill="#c08090" fill-opacity="0.36"/><circle cx="723" cy="617" r="0.6" fill="#c08090" fill-opacity="0.41"/><circle cx="793" cy="606" r="0.6" fill="#8070a0" fill-opacity="0.58"/><circle cx="772" cy="598" r="0.6" fill="#b06080" fill-opacity="0.50"/><circle cx="809" cy="643" r="0.6" fill="#8070a0" fill-opacity="0.41"/><circle cx="818" cy="636" r="0.6" fill="#8070a0" fill-opacity="0.55"/><circle cx="718" cy="602" r="0.6" fill="#c08090" fill-opacity="0.37"/>
 <path d="M715 300L683 374" stroke="#8aa0b0" stroke-opacity="0.35" stroke-width="0.7"/>
 <path d="M198 225H287L273.3 253H198Z" fill="#00ccff"/>
 <path d="M295 225H306.8L293.5 253H282.6Z" fill="#e8574e"/>
 <rect x="348" y="307" width="544" height="257.5" rx="20" fill="rgb(45,118,168)" fill-opacity="0.22"/>
</svg>
<div class="t" style="left:146px;top:92px;font-size:24px;font-weight:bold;color:#fff;-webkit-text-stroke:0.5px currentColor">FACTS ABOUT <span style="color:#fdbb2d;-webkit-text-stroke:0.5px #fdbb2d">SOUTH AMERICA</span></div>
<div class="bul" style="top:206px"></div>
<div class="bul" style="top:263px"></div>
<div class="bul" style="top:320px"></div>
<div class="bul" style="top:377px"></div>
<div class="t st" style="top:205px">Fourth largest continent in the world.</div>
<div class="t st" style="top:262px">World's highest volcanoes Mt. Cotopaxi &amp; Mt. Chimborazo.</div>
<div class="t st" style="top:319px">World's largest river 'The Amazon rainforest'</div>
<div class="t st" style="top:376px">World's highest waterfalls 'The Angel Falls'.</div>
</div>
<!-- cursor -->
<svg style="left:1011px;top:328px" width="12" height="18" viewBox="0 0 12 18">
 <path d="M0.7 0.7V14.5L4 11.3L6.6 16.8L9 15.8L6.6 10.5H11Z" fill="#000" stroke="#fff" stroke-width="1.2" stroke-linejoin="round"/>
</svg>

<!-- ============ RIGHT PANEL ============ -->
<div class="t" style="left:1135px;top:98.5px;font-size:15.5px;color:#333">Transition</div>
<div class="a" style="left:1190px;top:135px;width:129px;height:25px;border:1px solid #d6d6d6;border-radius:2px"></div>
<div class="t" style="left:1205.5px;top:141.5px;font-size:12.6px;color:#e8604c">Add Transition</div>
<svg style="left:1291px;top:147px" width="7" height="5" viewBox="0 0 7 5"><path d="M0.5 0.8L3.5 3.8L6.5 0.8" stroke="#e8604c" stroke-width="1" fill="none"/></svg>
<div class="t" style="left:1134.5px;top:192.8px;font-size:13.3px;font-weight:bold;color:#333">Advance Slide</div>
<svg style="left:1135px;top:217px" width="14" height="14" viewBox="0 0 14 14">
 <path d="M7 1.2H1.2V12.8H12.8V7" stroke="#e8604c" stroke-width="1.2" fill="none"/>
 <path d="M3.5 6L6 9L12.5 0.8" stroke="#e8604c" stroke-width="1.3" fill="none"/>
</svg>
<div class="t" style="left:1154.5px;top:217.8px;font-size:12.3px;color:#444">On Click</div>
<div class="a" style="left:1136px;top:247px;width:12px;height:12px;border:1.2px solid #e8604c"></div>
<div class="t" style="left:1154.5px;top:246.5px;font-size:12.3px;color:#444;letter-spacing:.4px">After</div>
<div class="t" style="left:1205px;top:246px;font-size:11px;color:#c8c8c8">0</div>
<div class="t" style="left:1246px;top:248px;font-size:8px;color:#ddd">s</div>
<div class="hl" style="left:1216px;top:280px;width:76px;background:#dedede"></div>
<div class="t" style="left:1282.5px;top:294.5px;font-size:11.5px;color:#e05a3f">Apply to All Slides</div>

<!-- ============ FOOTER ============ -->
<div class="hl" style="left:15px;top:698px;width:1373px;background:#e3e3e3"></div>
<svg style="left:25px;top:705px" width="17" height="15" viewBox="0 0 17 15">
 <path d="M8 0.8C4 0.8 0.8 3 0.8 5.8C0.8 7.5 2 9 3.8 9.8L3.2 13.5L6.8 10.6C7.2 10.7 7.6 10.7 8 10.7C12 10.7 15.2 8.5 15.2 5.8C15.2 3 12 0.8 8 0.8Z" stroke="#333" stroke-width="1.1" fill="none" stroke-linejoin="round"/>
 <path d="M12.5 10L14.5 13.2L15.8 11" stroke="#333" stroke-width="1.1" fill="none"/>
 <circle cx="4.8" cy="5.6" r="0.9" fill="#2a86b8"/><circle cx="8" cy="5.6" r="0.9" fill="#2a86b8"/><circle cx="11.2" cy="5.6" r="0.9" fill="#2a86b8"/>
</svg>
<div class="vl" style="left:52px;top:699px;height:17px;background:#e3e3e3"></div>
<div class="a" style="left:76px;top:704px;width:26px;height:18px;border:1px solid #dcdcdc;background:#fdfdfd"></div>
<div class="t" style="left:85px;top:709px;font-size:11px;color:#e8473f">4</div>
<div class="t" style="left:106px;top:709px;font-size:11px;color:#333">/</div>
<div class="t" style="left:116px;top:709px;font-size:11px;color:#333">7 Slides</div>
<div class="vl" style="left:174px;top:699px;height:22px;background:#e3e3e3"></div>
<svg style="left:183px;top:707px" width="15" height="11" viewBox="0 0 15 11">
 <rect x="0.5" y="0.5" width="14" height="10" stroke="#555" stroke-width="1" fill="none"/>
 <rect x="2.5" y="2.5" width="2.5" height="2" stroke="#555" stroke-width="0.9" fill="none"/>
 <rect x="2.5" y="6.5" width="2.5" height="2" stroke="#555" stroke-width="0.9" fill="none"/>
 <rect x="6.5" y="2.5" width="6" height="6" stroke="#555" stroke-width="0.9" fill="none"/>
</svg>
<div class="t" style="left:205.6px;top:708px;font-size:11.4px;color:#333">Normal View</div>
<svg style="left:276px;top:712px" width="7" height="5" viewBox="0 0 7 5"><path d="M0.5 0.8L3.5 3.8L6.5 0.8" stroke="#555" stroke-width="1" fill="none"/></svg>
<div class="vl" style="left:296px;top:699px;height:17px;background:#e3e3e3"></div>

<div class="vl" style="left:1051px;top:699px;height:16px;background:#e3e3e3"></div>
<svg style="left:1061px;top:705px" width="12" height="14" viewBox="0 0 12 14">
 <path d="M0.6 0.6H8L11.4 4V13.4H0.6Z M8 0.6V4H11.4" stroke="#555" stroke-width="1" fill="none"/>
</svg>
<div class="t" style="left:1083px;top:707px;font-size:11.5px;color:#333">Notes</div>
<div class="vl" style="left:1120px;top:699px;height:17px;background:#e3e3e3"></div>
<svg style="left:1129px;top:705px" width="16" height="15" viewBox="0 0 16 15">
 <path d="M3.5 0V12M0 2.5H14" stroke="#1a7196" stroke-width="1" stroke-dasharray="1.5 1.2" fill="none"/>
 <rect x="6.5" y="6" width="8.5" height="8.5" stroke="#333" stroke-width="1.1" fill="none"/>
</svg>
<div class="vl" style="left:1153px;top:699px;height:17px;background:#e3e3e3"></div>
<div class="t" style="left:1166px;top:708px;font-size:11px;color:#333">93%</div>
<div class="a" style="left:1197px;top:712px;width:63px;height:2px;background:#e8473f"></div>
<div class="a" style="left:1270px;top:712px;width:82px;height:2px;background:#cfcfcf"></div>
<div class="a" style="left:1259px;top:707px;width:12px;height:12px;border-radius:50%;border:1px solid #b8b8b8;background:#fafafa"></div>
<svg style="left:1361px;top:705px" width="14" height="14" viewBox="0 0 14 14">
 <rect x="0.5" y="0.5" width="13" height="13" stroke="#aaa" stroke-width="1" stroke-dasharray="1.6 1.2" fill="none"/>
 <path d="M3 3L8 8M3 3V6.5M3 3H6.5" stroke="#8bbdd8" stroke-width="1.2" fill="none"/>
 <rect x="8" y="8" width="3" height="3" stroke="#8bbdd8" stroke-width="1.1" fill="none"/>
</svg>
</div></div></div>
</body></html>
